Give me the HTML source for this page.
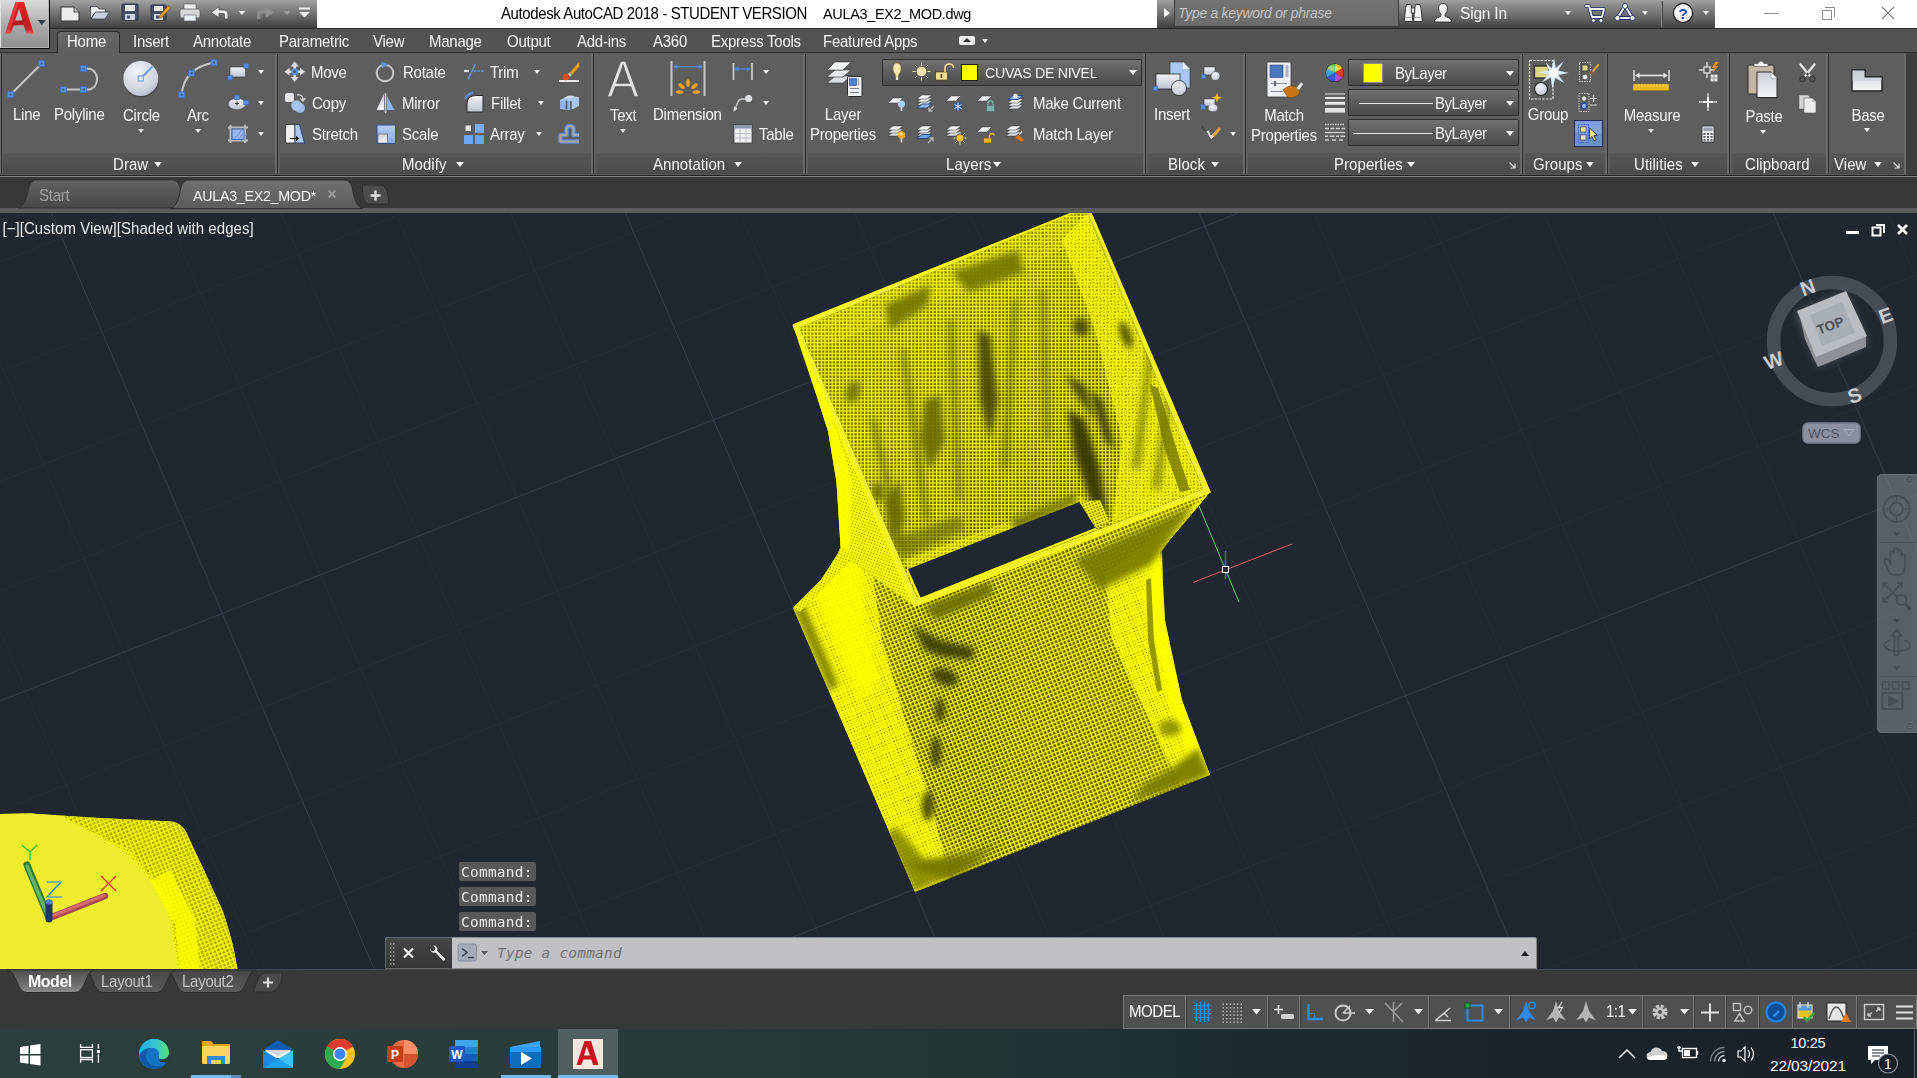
<!DOCTYPE html>
<html lang="en">
<head>
<meta charset="utf-8">
<title>Autodesk AutoCAD 2018 - STUDENT VERSION AULA3_EX2_MOD.dwg</title>
<style>
*{box-sizing:border-box;margin:0;padding:0}
html,body{width:1917px;height:1078px;overflow:hidden;background:#383838}
body{position:relative;font-family:"Liberation Sans",sans-serif;font-size:15px;color:#f0f0f0;-webkit-font-smoothing:antialiased}
.abs{position:absolute}
.t{position:absolute;white-space:nowrap;line-height:18px;height:18px;color:#f2f2f2;letter-spacing:-0.25px}
.tc{text-align:center}
.sy{transform:scaleY(1.06);transform-origin:0 14px}
svg{position:absolute;overflow:visible}
/* title */
#titlebar{left:0;top:0;width:1917px;height:28px;background:#fff}
#qat{left:49px;top:0;width:268px;height:28px;background:linear-gradient(#a2a2a2 0%,#8c8c8c 22%,#6c6c6c 55%,#4a4a4a 88%,#3e3e3e 100%)}
#appbtn{left:0;top:0;width:50px;height:49px;background:linear-gradient(#dadada 0%,#c4c4c4 25%,#a8a8a8 55%,#909090 100%);border-right:1.5px solid #0c0c0c;border-bottom:1.5px solid #0c0c0c;z-index:5;box-shadow:inset 1px 0 0 #e4e4e4,inset -1px -1px 0 #b4b4b4}
#infoc{left:1157px;top:0;width:558px;height:28px;background:linear-gradient(#a0a0a0 0%,#8a8a8a 22%,#6c6c6c 55%,#4c4c4c 88%,#404040 100%)}
/* ribbon */
#tabrow{left:0;top:28px;width:1917px;height:25px;background:#535353;border-top:1px solid #2a2a2a;border-bottom:1px solid #2c2c2c}
#ribbon{left:0;top:53px;width:1917px;height:122px;background:#5e5e5e}
.ptitle{position:absolute;top:100px;height:22px;background:linear-gradient(#575757,#4a4a4a)}
.psep{position:absolute;top:1px;width:3px;height:121px;border-left:1px solid #6a6a6a;border-right:1px solid #2b2b2b;background:#6a6a6a}
.rt{color:#f4f4f4;transform:scaleY(1.08);transform-origin:0 14px}
.combo{position:absolute;height:27px;border:1px solid #2e2e2e;background:linear-gradient(#727272,#5c5c5c 50%,#4c4c4c);border-radius:1px}
.arr{position:absolute;width:0;height:0;margin-left:-1px;border-left:4.8px solid transparent;border-right:4.8px solid transparent;border-top:5.2px solid #f4f4f4}
.arrs{position:absolute;width:0;height:0;border-left:3.5px solid transparent;border-right:3.5px solid transparent;border-top:4px solid #f4f4f4}
/* file tabs */
#ftrow{left:0;top:175px;width:1917px;height:33px;background:#383838;border-top:1px solid #222}
#ftline{left:0;top:176px;width:1917px;height:1px;background:#888}
#ftstrip{left:0;top:208px;width:1917px;height:5px;background:#5c5c5c}
/* viewport */
#vp{left:0;top:213px;width:1917px;height:756px;background:#212730;overflow:hidden}
/* bottom */
#ltrow{left:0;top:969px;width:1917px;height:60px;background:#383838;border-top:1px solid #4a4a4a}
#status{left:1123px;top:995px;width:794px;height:34px;background:#505050;border:1px solid #777}
/* taskbar */
#taskbar{left:0;top:1029px;width:1917px;height:49px;background:linear-gradient(90deg,#2c3f3c 0%,#2a3c3a 30%,#233634 50%,#1c2c2d 65%,#1a232a 82%,#1a2029 100%)}
</style>
</head>
<body>
<!-- ===== TITLE BAR ===== -->
<div id="titlebar" class="abs"></div>
<div id="qat" class="abs"></div>
<div id="infoc" class="abs"></div>
<div class="t sy" style="left:501px;top:5px;color:#000;font-size:15px;letter-spacing:-0.4px">Autodesk AutoCAD 2018 - STUDENT VERSION</div>
<div class="t sy" style="left:823px;top:5px;color:#000;font-size:14.5px;letter-spacing:-0.35px">AULA3_EX2_MOD.dwg</div>
<!-- info center -->
<div class="abs" style="left:1174px;top:0;width:225px;height:27px;background:linear-gradient(#737373,#6e6e6e 60%,#6a6a6a);border:1px solid #3c3c3c;border-top:none"></div>
<div class="abs" style="left:1164px;top:8px;width:0;height:0;border-top:5px solid transparent;border-bottom:5px solid transparent;border-left:6px solid #f0f0f0"></div>
<div class="t" style="left:1178px;top:5px;font-style:italic;color:#c4c4c4;font-size:13.8px;letter-spacing:-0.2px">Type a keyword or phrase</div>
<div class="t sy" style="left:1460px;top:5px;font-size:15.5px;color:#f4f4f4;letter-spacing:-0.2px">Sign In</div>
<div class="arrs" style="left:1565px;top:11px"></div>
<div class="arrs" style="left:1642px;top:11px"></div>
<div class="arrs" style="left:1703px;top:11px"></div>
<div class="abs" style="left:1661px;top:1px;width:1px;height:26px;background:#8a8a8a"></div><div class="abs" style="left:1662px;top:1px;width:1px;height:26px;background:#444"></div>
<svg width="560" height="28" style="left:1157px;top:0" viewBox="1157 0 560 28">
  <!-- binoculars -->
  <g fill="#f4f4f4" stroke="#2a2a2a" stroke-width="0.9" stroke-linejoin="round">
    <path d="M1406.500 4.500 h4.500 l.8 4 l1 13 h-8.600 l1.300 -13z"/><path d="M1415.500 4.500 h4.500 l1 4 l1.300 13 h-8.600 l1 -13z"/>
    <rect x="1411.300" y="8" width="3.400" height="5"/>
  </g>
  <path d="M1405.500 17.500 h6 M1414.500 17.500 h6" stroke="#9a9a9a" stroke-width="1"/>
  <!-- person -->
  <g fill="#f4f4f4" stroke="#2a2a2a" stroke-width="0.9">
    <path d="M1434.500 22 q0 -4 5 -5 q2 -.5 1.500 -2.500 q-2.500 -2.500 -2.500 -6 q0 -5 4.500 -5 q4.500 0 4.500 5 q0 3.500 -2.500 6 q-.5 2 1.500 2.500 q5 1 5 5z"/>
  </g>
  <!-- cart -->
  <g fill="none" stroke="#1c2a6a" stroke-width="3.4" stroke-linejoin="round" stroke-linecap="round"><path d="M1586 6 h3 l3 11 h10 l2 -8 h-13"/></g>
  <g fill="none" stroke="#f4f4f4" stroke-width="1.9" stroke-linejoin="round" stroke-linecap="round"><path d="M1586 6 h3 l3 11 h10 l2 -8 h-13"/></g>
  <circle cx="1593.5" cy="20.5" r="2" fill="#f4f4f4" stroke="#1c2a6a" stroke-width=".8"/><circle cx="1601" cy="20.5" r="2" fill="#f4f4f4" stroke="#1c2a6a" stroke-width=".8"/>
  <!-- a360 -->
  <g fill="none" stroke="#1c2a6a" stroke-width="3.8" stroke-linejoin="round"><path d="M1625 6 l7.5 12 h-15z"/></g>
  <g fill="none" stroke="#f4f4f4" stroke-width="2.2" stroke-linejoin="round"><path d="M1625 6 l7.5 12 h-15z"/></g>
  <circle cx="1625" cy="6" r="2.6" fill="#f4f4f4" stroke="#1c2a6a" stroke-width=".8"/><circle cx="1617.5" cy="18" r="2.6" fill="#f4f4f4" stroke="#1c2a6a" stroke-width=".8"/><circle cx="1632.5" cy="18" r="2.6" fill="#f4f4f4" stroke="#1c2a6a" stroke-width=".8"/>
  <!-- help -->
  <circle cx="1683" cy="13" r="9.6" fill="#f4f4f6" stroke="#1e1e1e" stroke-width="1.2"/>
  <text x="1683" y="18.5" text-anchor="middle" font-family="Liberation Sans, sans-serif" font-weight="bold" font-size="15.5" fill="#1f4fc0">?</text>
</svg>
<!-- window controls -->
<div class="abs" style="left:1764px;top:13px;width:14px;height:1px;background:#8c8c8c"></div>
<div class="abs" style="left:1822px;top:10px;width:10px;height:10px;border:1px solid #8c8c8c"></div>
<div class="abs" style="left:1825px;top:7px;width:10px;height:10px;border:1px solid #8c8c8c;border-left:none;border-bottom:none"></div>
<svg width="16" height="16" style="left:1881px;top:6px" viewBox="0 0 16 16"><path d="M1 1 L13 13 M13 1 L1 13" stroke="#7c7c7c" stroke-width="1.1" fill="none"/></svg>
<!-- app button -->
<div id="appbtn" class="abs"></div>
<svg width="49" height="48" style="left:0;top:0;z-index:6" viewBox="0 0 49 48">
  <defs><linearGradient id="agr" x1="0" y1="0" x2="0" y2="1"><stop offset="0" stop-color="#e2262a"/><stop offset=".55" stop-color="#cc1a20"/><stop offset=".85" stop-color="#c4242a"/><stop offset="1" stop-color="#e0686a"/></linearGradient></defs>
  <path d="M15.500 2 h8.500 l9.800 31.800 h-7.600 l-2.400 -8.600 h-10 l-3.200 8.600 h-5.600z M19 9 l-4 11.500 h7.600z" fill="url(#agr)" fill-rule="evenodd"/>
  <path d="M15.500 2 l3 0 l-9.500 31.800 h-4z" fill="#ef4a4e" opacity=".55"/>
  <path d="M11.500 24 l12.500 -4.500 l.8 3 l-11.500 3.500z" fill="#a8141a" opacity=".7"/>
  <path d="M37.500 20 h8.500 l-4.250 5z" fill="#3a3f4c"/>
</svg>
<!-- QAT icons -->
<svg width="268" height="28" style="left:49px;top:0" viewBox="49 0 268 28">
  <!-- new -->
  <path d="M61 7 h13 l5 5 v9 h-18z" fill="#ececec" stroke="#333" stroke-width="1"/>
  <path d="M74 7 v5 h5" fill="#bbb" stroke="#333" stroke-width=".8"/>
  <!-- open -->
  <path d="M90.500 18.500 v-12 h6.500 l2 2.500 h6.500 v3.500 h-10 l-5 6z" fill="#eceef2" stroke="#3a3e48" stroke-width=".8"/>
  <path d="M91 19 l4.500 -7 h14 l-4.500 7z" fill="#c9cedb" stroke="#3a3e48" stroke-width=".8"/>
  <!-- save -->
  <rect x="122" y="4" width="16" height="16" rx="1" fill="#474d64" stroke="#2c3040"/>
  <rect x="125" y="5" width="10" height="6" fill="#e8e8e8"/><rect x="125" y="14" width="10" height="6" fill="#cfd4de"/><rect x="127" y="15.500" width="3" height="3" fill="#474d64"/>
  <!-- saveas -->
  <rect x="151" y="5" width="15" height="15" rx="1" fill="#474d64" stroke="#2c3040"/>
  <rect x="154" y="6" width="9" height="5" fill="#e8e8e8"/><rect x="154" y="14" width="9" height="6" fill="#cfd4de"/><rect x="156" y="15.500" width="3" height="3" fill="#474d64"/>
  <path d="M160 15 l8 -9 l2.500 2 l-8 9 l-3.500 1z" fill="#e8a020" stroke="#6b4a10" stroke-width=".6"/>
  <!-- print -->
  <rect x="184" y="4" width="12" height="6" fill="#f0f0f0" stroke="#555" stroke-width=".6"/>
  <rect x="180" y="9" width="20" height="9" rx="2" fill="#d6d6d6" stroke="#555" stroke-width=".7"/>
  <rect x="184" y="15" width="12" height="6" fill="#e9f0fb" stroke="#555" stroke-width=".6"/>
  <!-- undo -->
  <path d="M211 12.500 l8 -6 v3.500 h5 q4 0 4 4 v5 h-3.500 v-4.500 q0 -1 -1 -1 h-4.500 v4z" fill="#ececec" stroke="#444" stroke-width=".7"/>
  <path d="M238.500 11 h7 l-3.500 4z" fill="#f2f2f2"/>
  <!-- redo (disabled) -->
  <path d="M274 12.500 l-8 -6 v3.500 h-5 q-4 0 -4 4 v5 h3.500 v-4.500 q0 -1 1 -1 h4.500 v4z" fill="#8f8f8f"/>
  <path d="M283.500 11 h7 l-3.500 4z" fill="#a0a0a0"/>
  <!-- customize -->
  <rect x="299" y="7.500" width="11" height="2" fill="#f2f2f2"/>
  <path d="M299 12 h11 l-5.500 5.500z" fill="#f2f2f2"/>
</svg>
<!-- ===== RIBBON TABS ===== -->
<div id="tabrow" class="abs"></div>
<div class="abs" style="left:57px;top:31px;width:63px;height:23px;background:linear-gradient(#666,#5e5e5e);border:1px solid #2c2c2c;border-bottom:none;border-radius:3px 3px 0 0"></div>
<div class="t rt" style="left:67px;top:33px">Home</div>
<div class="t rt" style="left:133px;top:33px">Insert</div>
<div class="t rt" style="left:193px;top:33px">Annotate</div>
<div class="t rt" style="left:279px;top:33px">Parametric</div>
<div class="t rt" style="left:373px;top:33px">View</div>
<div class="t rt" style="left:429px;top:33px">Manage</div>
<div class="t rt" style="left:507px;top:33px">Output</div>
<div class="t rt" style="left:577px;top:33px">Add-ins</div>
<div class="t rt" style="left:653px;top:33px">A360</div>
<div class="t rt" style="left:711px;top:33px">Express Tools</div>
<div class="t rt" style="left:823px;top:33px">Featured Apps</div>
<div class="abs" style="left:959px;top:36px;width:16px;height:9px;background:#ededed;border-radius:2px"></div>
<div class="abs" style="left:963px;top:38px;width:0;height:0;border-left:4px solid transparent;border-right:4px solid transparent;border-bottom:4px solid #333"></div>
<div class="arrs" style="left:982px;top:39px"></div>
<!-- ===== RIBBON BODY ===== -->
<div id="ribbon" class="abs">
  <div class="ptitle" style="left:3px;width:272px"></div>
  <div class="ptitle" style="left:280px;width:311px"></div>
  <div class="ptitle" style="left:596px;width:207px"></div>
  <div class="ptitle" style="left:808px;width:335px"></div>
  <div class="ptitle" style="left:1148px;width:95px"></div>
  <div class="ptitle" style="left:1248px;width:272px"></div>
  <div class="ptitle" style="left:1525px;width:80px"></div>
  <div class="ptitle" style="left:1610px;width:117px"></div>
  <div class="ptitle" style="left:1732px;width:94px"></div>
  <div class="ptitle" style="left:1831px;width:73px"></div>
  <div class="psep" style="left:0px;border-left:none;width:2px"></div>
  <div class="psep" style="left:275px"></div>
  <div class="psep" style="left:591px"></div>
  <div class="psep" style="left:803px"></div>
  <div class="psep" style="left:1143px"></div>
  <div class="psep" style="left:1243px"></div>
  <div class="psep" style="left:1520px"></div>
  <div class="psep" style="left:1605px"></div>
  <div class="psep" style="left:1727px"></div>
  <div class="psep" style="left:1826px"></div>
  <div class="psep" style="left:1904px"></div>
  <div class="abs" style="left:0;top:121px;width:1917px;height:1px;background:#5a5a5a"></div>
</div>
<!-- panel titles -->
<div class="t rt" style="left:113px;top:156px;letter-spacing:0.05px">Draw</div><div class="arr" style="left:155px;top:162px"></div>
<div class="t rt" style="left:402px;top:156px;letter-spacing:0.05px">Modify</div><div class="arr" style="left:457px;top:162px"></div>
<div class="t rt" style="left:653px;top:156px;letter-spacing:0.05px">Annotation</div><div class="arr" style="left:735px;top:162px"></div>
<div class="t rt" style="left:946px;top:156px;letter-spacing:0.05px">Layers</div><div class="arr" style="left:994px;top:162px"></div>
<div class="t rt" style="left:1168px;top:156px;letter-spacing:0.05px">Block</div><div class="arr" style="left:1212px;top:162px"></div>
<div class="t rt" style="left:1334px;top:156px;letter-spacing:0.05px">Properties</div><div class="arr" style="left:1408px;top:162px"></div>
<div class="t rt" style="left:1533px;top:156px;letter-spacing:0.05px">Groups</div><div class="arr" style="left:1587px;top:162px"></div>
<div class="t rt" style="left:1634px;top:156px;letter-spacing:0.05px">Utilities</div><div class="arr" style="left:1692px;top:162px"></div>
<div class="t rt" style="left:1745px;top:156px;letter-spacing:0.05px">Clipboard</div>
<div class="t rt" style="left:1834px;top:156px;letter-spacing:0.05px">View</div><div class="arr" style="left:1875px;top:162px"></div>
<!-- Draw labels -->
<div class="t rt" style="left:13px;top:106px">Line</div>
<div class="t rt" style="left:54px;top:106px">Polyline</div>
<div class="t rt" style="left:123px;top:107px">Circle</div><div class="arrs" style="left:138px;top:129px"></div>
<div class="t rt" style="left:187px;top:107px">Arc</div><div class="arrs" style="left:195px;top:129px"></div>
<div class="arrs" style="left:258px;top:70px"></div><div class="arrs" style="left:258px;top:101px"></div><div class="arrs" style="left:258px;top:132px"></div>
<!-- Modify labels -->
<div class="t rt" style="left:311px;top:64px">Move</div>
<div class="t rt" style="left:312px;top:95px">Copy</div>
<div class="t rt" style="left:312px;top:126px">Stretch</div>
<div class="t rt" style="left:403px;top:64px">Rotate</div>
<div class="t rt" style="left:402px;top:95px">Mirror</div>
<div class="t rt" style="left:402px;top:126px">Scale</div>
<div class="t rt" style="left:490px;top:64px">Trim</div><div class="arrs" style="left:534px;top:70px"></div>
<div class="t rt" style="left:491px;top:95px">Fillet</div><div class="arrs" style="left:538px;top:101px"></div>
<div class="t rt" style="left:490px;top:126px">Array</div><div class="arrs" style="left:536px;top:132px"></div>
<!-- Annotation labels -->
<div class="t rt" style="left:610px;top:107px">Text</div><div class="arrs" style="left:620px;top:129px"></div>
<div class="t rt" style="left:653px;top:106px">Dimension</div>
<div class="t rt" style="left:759px;top:126px">Table</div>
<div class="arrs" style="left:763px;top:70px"></div><div class="arrs" style="left:763px;top:101px"></div>
<!-- Layers labels -->
<div class="t rt tc" style="left:803px;width:80px;top:106px">Layer</div>
<div class="t rt tc" style="left:803px;width:80px;top:126px">Properties</div>
<div class="combo" style="left:882px;top:59px;width:260px"></div>
<div class="t rt" style="left:985px;top:64px;font-size:14.2px;letter-spacing:-0.3px">CUVAS DE NIVEL</div><div class="arr" style="left:1130px;top:70px"></div>
<div class="abs" style="left:961px;top:64px;width:17px;height:17px;background:#ffff00;border:1px solid #222"></div>
<div class="t rt" style="left:1033px;top:95px">Make Current</div>
<div class="t rt" style="left:1033px;top:126px">Match Layer</div>
<!-- Block -->
<div class="t rt tc" style="left:1142px;width:60px;top:106px">Insert</div>
<div class="arrs" style="left:1230px;top:132px"></div>
<!-- Properties -->
<div class="t rt tc" style="left:1244px;width:80px;top:107px">Match</div>
<div class="t rt tc" style="left:1244px;width:80px;top:127px">Properties</div>
<div class="combo" style="left:1348px;top:59px;width:171px"></div>
<div class="combo" style="left:1348px;top:89px;width:171px"></div>
<div class="combo" style="left:1348px;top:119px;width:171px"></div>
<div class="abs" style="left:1363px;top:63px;width:20px;height:20px;background:#ffff00;border:1px solid #8c8c8c"></div>
<div class="t rt" style="left:1395px;top:65px;letter-spacing:-0.5px">ByLayer</div><div class="arr" style="left:1507px;top:71px"></div>
<div class="abs" style="left:1359px;top:103px;width:74px;height:1px;background:#e6e6e6"></div>
<div class="t rt" style="left:1435px;top:95px;letter-spacing:-0.5px">ByLayer</div><div class="arr" style="left:1507px;top:101px"></div>
<div class="abs" style="left:1353px;top:133px;width:80px;height:1px;background:#e6e6e6"></div>
<div class="t rt" style="left:1435px;top:125px;letter-spacing:-0.5px">ByLayer</div><div class="arr" style="left:1507px;top:131px"></div>
<!-- Groups / Utilities / Clipboard / View -->
<div class="t rt tc" style="left:1518px;width:60px;top:106px">Group</div>
<div class="t rt tc" style="left:1617px;width:70px;top:107px">Measure</div><div class="arrs" style="left:1648px;top:129px"></div>
<div class="t rt tc" style="left:1734px;width:60px;top:108px">Paste</div><div class="arrs" style="left:1760px;top:130px"></div>
<div class="t rt tc" style="left:1838px;width:60px;top:107px">Base</div><div class="arrs" style="left:1864px;top:128px"></div>
<svg width="400" height="12" style="left:1505px;top:160px" viewBox="1505 160 400 12"><g stroke="#dcdcdc" stroke-width="1.200" fill="none"><path d="M1509.500 162.500 l5 5 M1515 163.500 v4.500 h-4.500"/><path d="M1893.500 162.500 l5 5 M1899 163.500 v4.500 h-4.500"/></g></svg>
<!-- ===== RIBBON ICONS ===== -->
<div class="abs" style="left:1906px;top:53px;width:11px;height:122px;background:#3e3e3e"></div>
<div class="t" style="left:606px;top:52px;width:34px;text-align:center;height:56px;line-height:56px;font-size:51px;color:#e2e2e2;letter-spacing:0;-webkit-text-stroke:1.3px #5e5e5e;transform:scaleX(.94)">A</div>
<svg width="1917" height="100" style="left:0;top:55px" viewBox="0 55 1917 100">
<defs>
  <linearGradient id="gW" x1="0" y1="0" x2="0" y2="1"><stop offset="0" stop-color="#f4f5f8"/><stop offset="1" stop-color="#bcc1cf"/></linearGradient>
  <linearGradient id="gW2" x1="0" y1="0" x2="0" y2="1"><stop offset="0" stop-color="#c9cdd6"/><stop offset="1" stop-color="#f6f6f8"/></linearGradient>
  <linearGradient id="gB" x1="0" y1="0" x2="0" y2="1"><stop offset="0" stop-color="#b7cdf0"/><stop offset="1" stop-color="#86a9e2"/></linearGradient>
  <radialGradient id="gC" cx=".4" cy=".3" r=".8"><stop offset="0" stop-color="#f2f3f8"/><stop offset=".7" stop-color="#cfd3df"/><stop offset="1" stop-color="#a9b0c4"/></radialGradient>
  <g id="grip"><rect x="-3" y="-3" width="6" height="6" fill="#5d92e6" stroke="#3f6cc0" stroke-width=".8"/><rect x="-1" y="-1" width="2" height="2" fill="#3a5688"/></g>
  <g id="grips"><rect x="-2.200" y="-2.200" width="4.400" height="4.400" fill="#5d92e6" stroke="#3f6cc0" stroke-width=".7"/></g>
  <g id="sheet"><path d="M-7 2 l5 -5 h10 l-5 5z" fill="#eef0f3" stroke="#3a3a3a" stroke-width=".5"/></g>
  <g id="stack"><path d="M-7 6 l5 -4 h10 l-5 4z" fill="#d8dbe0" stroke="#333" stroke-width=".5"/><path d="M-7 3 l5 -4 h10 l-5 4z" fill="#e4e6ea" stroke="#333" stroke-width=".5"/><path d="M-7 0 l5 -4 h10 l-5 4z" fill="#f2f3f5" stroke="#333" stroke-width=".5"/></g>
</defs>
<!-- DRAW -->
<path d="M10.500 94.700 L41.700 63.500" stroke="#c6c6c6" stroke-width="2" fill="none"/>
<use href="#grip" x="10.500" y="94.700"/><use href="#grip" x="41.700" y="63.500"/>
<path d="M63.400 89.600 H87 C100.500 89.600 100.500 68.600 87 68.600 H83.500" stroke="#c6c6c6" stroke-width="2" fill="none"/>
<use href="#grip" x="63.400" y="89.600"/><use href="#grip" x="83.500" y="89.600"/><use href="#grip" x="83.500" y="68.600"/>
<circle cx="141" cy="80" r="17.500" fill="#333" opacity=".55"/>
<circle cx="140.800" cy="78.500" r="17.500" fill="url(#gC)"/>
<path d="M140.800 78.500 L152.500 66.500" stroke="#6fa0f0" stroke-width="2" fill="none"/>
<rect x="138.300" y="76" width="5" height="5" fill="#f4f6fb" stroke="#6fa0f0" stroke-width="1.200"/>
<path d="M181.600 94.800 Q184 68 214 62.500" stroke="#c6c6c6" stroke-width="2" fill="none"/>
<use href="#grip" x="181.600" y="94.800"/><use href="#grip" x="191.600" y="73.100"/><use href="#grip" x="214" y="62.500"/>
<rect x="230" y="67" width="15.500" height="10" fill="url(#gW)" stroke="#333" stroke-width=".6"/><use href="#grips" x="246" y="66"/><use href="#grips" x="230" y="77.700"/>
<ellipse cx="237" cy="104" rx="8.700" ry="5.700" fill="url(#gW)" stroke="#444" stroke-width=".5"/><path d="M235 103.500 h4 M237 101.500 v4" stroke="#222" stroke-width="1"/><use href="#grips" x="237" y="97.500"/><use href="#grips" x="246" y="102.500"/>
<path d="M228 127.500 h20 M228 140.500 h20 M230.500 125 v18 M245 125 v18" stroke="#bdbdbd" stroke-width="2" fill="none"/>
<rect x="232" y="129" width="12" height="10.500" fill="#9ab6ec" stroke="#3c66b8" stroke-width="1"/><path d="M234 139 l8 -9 M238 139.500 l6 -7 M240 142 l7 -8" stroke="#5f8fe6" stroke-width="1" fill="none"/>
<!-- MODIFY col1 -->
<g fill="#dedede"><path d="M294.700 61.500 l4 5 h-2.700 v3.500 h-2.600 v-3.500 h-2.700z"/><path d="M294.700 82 l4 -5 h-2.700 v-3.500 h-2.600 v3.500 h-2.700z"/><path d="M284.500 71.800 l5 -4 v2.700 h3.500 v2.600 h-3.500 v2.700z"/><path d="M305 71.800 l-5 -4 v2.700 h-3.500 v2.600 h3.500 v2.700z"/></g>
<circle cx="294.700" cy="71.800" r="2.600" fill="none" stroke="#5d8fe0" stroke-width="1.800"/>
<rect x="285" y="93" width="9" height="9" rx="2.500" fill="#e2e4ea"/><circle cx="300" cy="108" r="5" fill="#9fb9e4"/><circle cx="296.500" cy="105.500" r="5.200" fill="#a9c5f0"/><path d="M297 95 q6 -1 6 5 M300.500 98.500 l2.500 2.500 l2.500 -3" stroke="#cfcfcf" stroke-width="1.300" fill="none"/>
<path d="M285.500 124.500 h9.500 v18.500 h-9.500z" fill="#eff0f2" stroke="#2b2b2b" stroke-width=".8"/><path d="M295 124.500 h4.500 l5 18.500 h-9.500z" fill="#a9c6ec" stroke="#25407a" stroke-width=".9"/><path d="M290 138 h6 v-2.200 l3 2.700 l-3 2.700 v-2.200 h-6z" fill="#111"/>
<!-- MODIFY col2 -->
<circle cx="385" cy="73" r="8.300" fill="none" stroke="#c6c6c6" stroke-width="2"/><path d="M381.500 61.500 l7 3 l-6.500 4z" fill="#5d92e6"/>
<path d="M376.500 110 L384 94 V110Z" fill="url(#gW2)"/><path d="M385.500 93 V113" stroke="#d4d4d4" stroke-width="1.500"/><path d="M387 110 V96 L394.500 110Z" fill="#8db3e8"/>
<rect x="377" y="125" width="18.500" height="18.500" fill="url(#gB)" stroke="#33508f" stroke-width="1"/><rect x="378" y="134" width="9.500" height="9" fill="url(#gW2)" stroke="#555" stroke-width=".6"/>
<!-- MODIFY col3 -->
<path d="M464 71 h5" stroke="#e4e4e4" stroke-width="2.200"/><path d="M468 79.500 L475.500 64" stroke="#6796e4" stroke-width="1.600"/><path d="M474 71 h10" stroke="#6796e4" stroke-width="1.500" stroke-dasharray="2.500 1"/>
<path d="M465 99 Q467 94 473 92.500" stroke="#5d8fe0" stroke-width="2" fill="none"/><path d="M467 112 V104 Q467 95.500 476 95.500 H483 V112Z" fill="url(#gW)" stroke="#2c2c2c" stroke-width="1"/>
<rect x="465" y="125" width="6.500" height="6.500" fill="#e6e6e6" stroke="#444" stroke-width=".8"/><rect x="475" y="124" width="9" height="9" fill="#7aacf0"/><rect x="464" y="135" width="9" height="9" fill="#6fa4ee"/><rect x="475" y="135" width="9" height="9" fill="#6fa4ee"/>
<!-- MODIFY col4 -->
<path d="M559 81 h20" stroke="#e8e8e8" stroke-width="2"/><path d="M579 62 l-9.500 10.500 l2.500 2.500 l7.500 -8.500z" fill="#e2a21e" stroke="#8a5c10" stroke-width=".5"/><path d="M569.500 72.500 l2.500 2.500 l-1.800 1.800 l-2.500 -2.500z" fill="#c0c0c0"/><circle cx="565.800" cy="77" r="3.200" fill="#e2520e"/>
<path d="M560 100 l8 -4 l11 1 v9 l-8 4 l-11 -1z" fill="#a9c6ec"/><path d="M560 100 l11 1 v9 l-11 -1z" fill="#8fb3e6"/><path d="M564 98 l5 -2.500 l6 .5 l-5 2.500z" fill="#cfe0f6"/><path d="M566.500 100.500 v9 M571 101 v9" stroke="#5e5e5e" stroke-width="1.600"/>
<path d="M579 141.500 H560.500 V135 H566.500 V129.500 Q566.500 126 570 126 Q573.500 126 573.500 129.500 V135 H579" stroke="#5d8fe0" stroke-width="4.500" fill="none" stroke-linejoin="round" opacity=".9"/><path d="M579 141.500 H560.500 V135 H566.500 V129.500 Q566.500 126 570 126 Q573.500 126 573.500 129.500 V135 H579" stroke="#a8a8a8" stroke-width="2" fill="none" stroke-linejoin="round"/>
<!-- ANNOTATION -->
<path d="M671.500 61 V96 M704.500 61 V96" stroke="#c8c8c8" stroke-width="2"/><path d="M675 66.700 H701" stroke="#4f86e4" stroke-width="1.400"/><path d="M673 66.700 l4 -2.600 v5.200z M703 66.700 l-4 -2.600 v5.200z" fill="#4f86e4"/>
<g fill="#f0a010"><ellipse cx="688" cy="83" rx="1.800" ry="3.800"/><ellipse cx="681.500" cy="86" rx="1.800" ry="3.800" transform="rotate(-50 681.500 86)"/><ellipse cx="694.500" cy="86" rx="1.800" ry="3.800" transform="rotate(50 694.500 86)"/><ellipse cx="679.500" cy="92" rx="1.800" ry="3.800" transform="rotate(-85 679.500 92)"/><ellipse cx="696.500" cy="92" rx="1.800" ry="3.800" transform="rotate(85 696.500 92)"/></g>
<path d="M733.500 63 V80 M752 63 V80" stroke="#c8c8c8" stroke-width="1.800"/><path d="M737 69 H749" stroke="#4f86e4" stroke-width="1.400"/><path d="M734.500 69 l4 -2.600 v5.200z M751 69 l-4 -2.600 v5.200z" fill="#4f86e4"/>
<circle cx="748.600" cy="98.500" r="3.600" fill="#dfe1e6"/><path d="M745 99 h-3 q-3 0 -4.500 4 l-2.500 6" stroke="#c8c8c8" stroke-width="1.500" fill="none"/><path d="M733.500 112 l.5 -5.500 l3.500 2z" fill="#dcdcdc"/>
<rect x="734" y="124.500" width="18" height="18.500" fill="#f0f0f2" stroke="#3a3a3a" stroke-width=".8"/><rect x="734.500" y="125" width="17" height="3.500" fill="#8c98b4"/><path d="M734 133.500 h18 M734 138 h18 M740 128.500 v14.500 M746 128.500 v14.500" stroke="#b8bcc6" stroke-width="1"/>
<!-- LAYERS -->
<g stroke="#333" stroke-width=".6"><path d="M827 83 l8 -7 h16 l-8 7z" fill="#dadde2"/><path d="M827 77 l8 -7 h16 l-8 7z" fill="#e8eaee"/><path d="M827 70 l8 -8 h16 l-8 8z" fill="#f6f7f9"/></g>
<rect x="847.500" y="76.500" width="14.500" height="20" rx="1" fill="#f0f1f4" stroke="#2a2a2a" stroke-width="1"/><rect x="849.500" y="78.500" width="7" height="7" fill="#4f7fd0" stroke="#2a4a8a" stroke-width=".6"/><path d="M858.500 78.500 v7" stroke="#a0a4ae" stroke-width="1.500"/><path d="M850 88.500 h9 M850 92.500 h9" stroke="#7a8090" stroke-width="1.200"/>
<path d="M893 69 q0 -6 4 -6 q4 0 4 6 q0 3 -2.500 6 v2 h-3 v-2 q-2.500 -3 -2.500 -6z" fill="#f7e6a6" stroke="#6b5a20" stroke-width=".4"/><rect x="895.800" y="77" width="2.400" height="3" fill="#e8e8e8"/>
<circle cx="921.500" cy="71.500" r="4.800" fill="#f6e4a8"/><path d="M921.500 62.500 v3 M921.500 77.500 v3 M912.500 71.500 h3 M927.500 71.500 h3 M915 65 l2.200 2.200 M925.800 75.800 l2.200 2.200 M915 78 l2.200 -2.200 M925.800 67.200 l2.200 -2.200" stroke="#e8e0c0" stroke-width="1"/>
<rect x="935.500" y="72" width="12" height="8" fill="#f2de94" stroke="#4a3c10" stroke-width=".7"/><path d="M945 72 v-4 q0 -4 4.500 -4 q4 0 4 4" stroke="#f2de94" stroke-width="1.600" fill="none"/><rect x="940.700" y="74" width="1.500" height="4" fill="#4a3c10"/>
<!-- layers row 2 -->
<use href="#sheet" x="895" y="101"/><circle cx="901.500" cy="104" r="3.600" fill="#a8cdf6"/><rect x="900.700" y="107" width="1.600" height="4" fill="#e8e8e8"/>
<use href="#stack" x="924" y="99"/><path d="M917 108 l5 -4 h10 l-5 4z" fill="#8fb5ec" stroke="#1f3f86" stroke-width=".8"/><path d="M934 106 l-5 5 M929 107.500 v3.500 h3.500" stroke="#b0b0b0" stroke-width="1.400" fill="none"/>
<use href="#sheet" x="953" y="99"/><path d="M954 104 l4 -2.300 l4 2.300 v4.600 l-4 2.300 l-4 -2.300z" fill="#2c56b0"/><path d="M958 102.500 v8 M954.500 104.500 l7 4 M961.500 104.500 l-7 4" stroke="#e6eefc" stroke-width="1"/>
<use href="#sheet" x="984" y="99"/><rect x="986.500" y="105.500" width="8" height="6" fill="#7fb0a8" stroke="#3a6a62" stroke-width=".6"/><path d="M988 105.500 v-2 q0 -2.500 2.500 -2.500 q2.500 0 2.500 2.500 v2" stroke="#7fb0a8" stroke-width="1.300" fill="none"/>
<use href="#stack" x="1015" y="103"/><path d="M1008 99.500 l5 -4 h10 l-5 4z" fill="#8fb5ec" stroke="#1f3f86" stroke-width=".8"/><circle cx="1015.500" cy="96" r="2.300" fill="#e8e8ea"/>
<!-- layers row 3 -->
<use href="#stack" x="895" y="130"/><circle cx="901.500" cy="135" r="3.700" fill="#f6a820"/><circle cx="901" cy="134" r="1.600" fill="#fde28a"/><rect x="900.700" y="138.500" width="1.600" height="4" fill="#e8e8e8"/>
<use href="#stack" x="924" y="130"/><path d="M917 138.500 l5 -4 h10 l-5 4z" fill="#6f9fe4" stroke="#1f3f86" stroke-width=".8"/><path d="M928 143 l5 -5 M929.500 138 h3.500 v3.500" stroke="#b0b0b0" stroke-width="1.400" fill="none"/>
<use href="#stack" x="953" y="130"/><circle cx="960" cy="138" r="3.500" fill="#f8c218"/><path d="M960 131.500 v2 M960 142.500 v2 M953.500 138 h2 M964.500 138 h2 M955.500 133.500 l1.500 1.500 M963 141 l1.500 1.500 M955.500 142.500 l1.500 -1.500 M963 135 l1.500 -1.500" stroke="#f0ecd0" stroke-width="1"/>
<use href="#sheet" x="984" y="130"/><rect x="983.500" y="138" width="8" height="5" fill="#e8b414" stroke="#6a4e08" stroke-width=".6"/><path d="M989.500 138 v-2 q0 -2.500 2.500 -2.500 q2 0 2 2" stroke="#e8b414" stroke-width="1.300" fill="none"/>
<use href="#stack" x="1013" y="130"/><path d="M1015 137 l6 5 l3 -2 l-5 -5z" fill="#d8720e"/><path d="M1019 134.500 l3 -3" stroke="#e8e8e8" stroke-width="1.300"/>
<!-- BLOCK -->
<path d="M1170 62 h13 l7 7 v19 h-20z" fill="#a9c8f0" stroke="#333" stroke-width=".6"/><path d="M1183 62 v7 h7z" fill="#e4eefb"/>
<rect x="1156" y="74" width="24" height="15" fill="url(#gW)" stroke="#2a2a2a" stroke-width=".8"/><circle cx="1179" cy="88" r="7.600" fill="url(#gC)" stroke="#2a2a2a" stroke-width=".8"/><path d="M1179 80.500 v7.500 h-7.500" stroke="#b4b8c4" stroke-width=".8" fill="none"/><use href="#grips" x="1155.500" y="88.500"/>
<rect x="1204" y="67" width="11" height="8" fill="url(#gW)" stroke="#333" stroke-width=".5"/><circle cx="1215.500" cy="76" r="4.500" fill="url(#gC)" stroke="#333" stroke-width=".5"/><use href="#grips" x="1203.500" y="76.500"/>
<rect x="1204" y="99" width="11" height="7" fill="url(#gW)" stroke="#333" stroke-width=".5"/><ellipse cx="1213" cy="108" rx="4.500" ry="3.500" fill="url(#gC)"/><path d="M1217 93 l1.500 3.500 l3.500 1 l-3.500 1.500 l-1.500 3.500 l-1.500 -3.500 l-3.500 -1.500 l3.500 -1z" fill="#f4b41e"/><use href="#grips" x="1203" y="107"/>
<path d="M1206 131 l5 9 l9 -9 l-3 -2 l-6 6 l-2 -5z" fill="#e4e4e4" stroke="#333" stroke-width=".5"/><path d="M1212 135 l7 -8 l2 2 l-7 8z" fill="#e89c20"/><path d="M1202 126 q1 4 4 5" stroke="#333" stroke-width="1" fill="none"/>
<!-- PROPERTIES -->
<rect x="1267" y="62" width="24" height="35" rx="1" fill="#eef0f3" stroke="#3a3a3a" stroke-width=".8"/><rect x="1270" y="65" width="13" height="12.500" fill="#4878c0" stroke="#2a4a8a" stroke-width=".6"/><path d="M1287 65 v12" stroke="#b0b4be" stroke-width="3"/><path d="M1271 83.500 h16 M1271 91.500 h12" stroke="#8a90a0" stroke-width="1.200"/><path d="M1275 81 v5" stroke="#6a7080" stroke-width="2.500"/>
<path d="M1283 90 q6 -6 14 -3 l3 6 q-6 6 -12 4z" fill="#c87414" stroke="#7a4408" stroke-width=".6"/><path d="M1296 88 l5 -6 l2.500 2 l-4.500 6.500z" fill="#e8e8e8" stroke="#555" stroke-width=".5"/>
<g><circle cx="1334.800" cy="72.800" r="9.300" fill="#222"/><path d="M1334.800 72.800 L1334.800 64 A8.800 8.800 0 0 1 1342.400 68.400Z" fill="#f2c414"/><path d="M1334.800 72.800 L1342.400 68.400 A8.800 8.800 0 0 1 1342.400 77.200Z" fill="#e83a24"/><path d="M1334.800 72.800 L1342.400 77.200 A8.800 8.800 0 0 1 1334.800 81.600Z" fill="#b44ec8"/><path d="M1334.800 72.800 L1334.800 81.600 A8.800 8.800 0 0 1 1327.200 77.200Z" fill="#3a5ae0"/><path d="M1334.800 72.800 L1327.200 77.200 A8.800 8.800 0 0 1 1327.200 68.400Z" fill="#2aa8e0"/><path d="M1334.800 72.800 L1327.200 68.400 A8.800 8.800 0 0 1 1334.800 64Z" fill="#58c83a"/><ellipse cx="1333" cy="68.500" rx="5.500" ry="3" fill="#fff" opacity=".35"/></g>
<path d="M1325 94 h20" stroke="#e4e4e4" stroke-width="1"/><path d="M1325 98 h20" stroke="#e4e4e4" stroke-width="2"/><path d="M1325 103.300 h20" stroke="#e4e4e4" stroke-width="3"/><path d="M1325 110.300 h20" stroke="#e4e4e4" stroke-width="4.600"/>
<path d="M1325 124.500 h20" stroke="#cfcfcf" stroke-width="1.400" stroke-dasharray="1.500 1"/><path d="M1325 128.500 h20" stroke="#cfcfcf" stroke-width="1.400" stroke-dasharray="4 1.500"/><path d="M1325 132.500 h20" stroke="#cfcfcf" stroke-width="1.400"/><path d="M1325 136.200 h20" stroke="#cfcfcf" stroke-width="1.400" stroke-dasharray="3 1.500 5 1.500"/><path d="M1325 140 h20" stroke="#cfcfcf" stroke-width="1.400" stroke-dasharray="4 3"/>
<!-- GROUPS -->
<rect x="1529.500" y="60.500" width="23.500" height="38.500" fill="none" stroke="#e6e6e6" stroke-width="1.200" stroke-dasharray="2.500 1.200"/>
<rect x="1534.500" y="66" width="14" height="12" fill="#dada86" stroke="#222" stroke-width="1.200"/><circle cx="1541" cy="89" r="6.500" fill="url(#gC)" stroke="#222" stroke-width="1.200"/>
<path d="M1554 58 l1.800 10 l8 -7 l-5.500 9.500 l10.500 2.500 l-10.500 2 l6 8 l-9 -5 l-3 11 l-1.500 -11.500 l-9 5 l6.500 -8 l-10 -2 l10.500 -2 l-3 -8 l6 6z" fill="#dbeaff"/><circle cx="1554" cy="73" r="4.500" fill="#fff"/>
<rect x="1579.500" y="62.500" width="11" height="19" fill="none" stroke="#cfcfcf" stroke-width="1" stroke-dasharray="1.500 1"/><rect x="1582" y="65" width="6" height="6" fill="#dada86" stroke="#333" stroke-width=".8"/><circle cx="1585" cy="77" r="2.800" fill="#e6eaf0" stroke="#333" stroke-width=".6"/><path d="M1598 63.500 l-6 7.500 l1.500 1.500 l6 -7.500z" fill="#e2a21e"/><circle cx="1591" cy="73" r="1.300" fill="#d04818"/>
<rect x="1579" y="93.500" width="10" height="18" fill="none" stroke="#cfcfcf" stroke-width="1" stroke-dasharray="1.500 1"/><circle cx="1584" cy="98.500" r="2.600" fill="#e6eaf0" stroke="#333" stroke-width=".6"/><circle cx="1584" cy="106" r="2.800" fill="#8fb5ec" stroke="#234a9a" stroke-width="1.200"/><path d="M1590 98.500 h7 M1593.500 95 v7 M1590 105 h7" stroke="#cfcfcf" stroke-width="1.200"/>
<rect x="1574.500" y="120.500" width="28" height="26" fill="#6f8ed0" stroke="#1f2f5c" stroke-width="1"/><rect x="1575.500" y="121.500" width="26" height="12" fill="#8aa6de" opacity=".7"/><rect x="1578.500" y="124.500" width="10" height="18" fill="none" stroke="#2a62e8" stroke-width="1" stroke-dasharray="1.500 1"/><rect x="1580.500" y="127" width="5.500" height="5" fill="#e6e48a" stroke="#444" stroke-width=".6"/><rect x="1580.500" y="135" width="5.500" height="5" fill="#d4e2ea" stroke="#444" stroke-width=".6"/><path d="M1589.500 128 v11 l2.500 -2.500 l2 4.500 l2 -1 l-2 -4.500 h3.500z" fill="#e6e48a" stroke="#1f2f5c" stroke-width=".8"/>
<!-- UTILITIES -->
<path d="M1634 70 v11 M1669 70 v11" stroke="#d8d8d8" stroke-width="1.600"/><path d="M1637 75.500 h29" stroke="#e8e8e8" stroke-width="1.600"/><path d="M1635 75.500 l4.500 -2.800 v5.600z M1668 75.500 l-4.500 -2.800 v5.600z" fill="#e8e8e8"/>
<rect x="1633" y="84" width="36" height="6.500" rx="1" fill="#eab81c" stroke="#a87808" stroke-width=".6"/><path d="M1636 84 v2.500 M1639 84 v2.500 M1642 84 v2.500 M1645 84 v2.500 M1648 84 v2.500 M1651 84 v2.500 M1654 84 v2.500 M1657 84 v2.500 M1660 84 v2.500 M1663 84 v2.500 M1666 84 v2.500" stroke="#fae89a" stroke-width=".8"/>
<path d="M1699 70 h16 M1707 62 v16" stroke="#d4d4d4" stroke-width="1.600"/><rect x="1704" y="67" width="6" height="6" fill="#5a5a5a" stroke="#e8e8e8" stroke-width="1.200"/><path d="M1715 62 l-3 6 h2.500 l-2 5 l6 -7 h-2.500 l2.500 -4z" fill="#f08c14"/><rect x="1710.500" y="74.500" width="7" height="7" fill="#e4e4e4" stroke="#888" stroke-width=".6"/><path d="M1714 74.500 v7 M1710.500 78 h7" stroke="#888" stroke-width=".8"/>
<path d="M1699 102 h18 M1708 93 v18" stroke="#d0d0d0" stroke-width="1.500"/><path d="M1703 102 h10 M1708 97 v10" stroke="#f2f2f2" stroke-width="2"/>
<rect x="1702" y="126" width="12" height="16" rx="1" fill="#eef0f3" stroke="#2a2a2a" stroke-width=".8"/><rect x="1703.500" y="127.500" width="9" height="3.500" fill="#9aa0b0"/><g fill="#555"><rect x="1703.500" y="133" width="2" height="1.800"/><rect x="1707" y="133" width="2" height="1.800"/><rect x="1710.500" y="133" width="2" height="1.800"/><rect x="1703.500" y="136" width="2" height="1.800"/><rect x="1707" y="136" width="2" height="1.800"/><rect x="1710.500" y="136" width="2" height="1.800"/><rect x="1703.500" y="139" width="2" height="1.800"/><rect x="1707" y="139" width="2" height="1.800"/><rect x="1710.500" y="139" width="2" height="1.800"/></g>
<!-- CLIPBOARD -->
<rect x="1748" y="65" width="26" height="29" rx="1.500" fill="#c2b6a6" stroke="#2a2a2a" stroke-width="1"/><path d="M1754 66.500 v-2 q0 -1 1 -1 h3 q1 -2.500 3 -2.500 q2 0 3 2.500 h3 q1 0 1 1 v2z" fill="#f6f6f6" stroke="#444" stroke-width=".6"/>
<path d="M1757 72 h14 l6 6 v19.500 h-20z" fill="url(#gW2)" stroke="#2a2a2a" stroke-width="1"/><path d="M1771 72 v6 h6z" fill="#fff" stroke="#777" stroke-width=".5"/>
<path d="M1800.500 64.500 l9 11 M1814.500 64.500 l-9 11" stroke="#e4e4e4" stroke-width="2.400" stroke-linecap="round"/><circle cx="1802.500" cy="79" r="2.500" fill="none" stroke="#3e3e3e" stroke-width="1.600"/><circle cx="1812.500" cy="79" r="2.500" fill="none" stroke="#3e3e3e" stroke-width="1.600"/><circle cx="1807.500" cy="74" r="1.200" fill="#333"/>
<path d="M1799 95 h9 l2 2 v12 h-11z" fill="#d6d6d6" stroke="#555" stroke-width=".5"/><path d="M1804 98 h8 l4 4 v11 h-12z" fill="#ececec" stroke="#555" stroke-width=".6"/><path d="M1812 98 v4 h4z" fill="#c8c8c8"/>
<!-- VIEW -->
<path d="M1852 70 h13 v7 h17 v14 h-30z" fill="url(#gW2)" stroke="#1e1e1e" stroke-width="1.400" stroke-linejoin="round"/><path d="M1852.500 70.500 h12 v7 h17 v3 h-29z" fill="#cdd1da" opacity=".8"/>
</svg>
<!-- ===== FILE TABS ===== -->
<div id="ftrow" class="abs"></div>
<div id="ftline" class="abs"></div>
<div id="ftstrip" class="abs"></div>
<svg width="400" height="32" style="left:0;top:177px" viewBox="0 177 400 32">
  <defs>
    <linearGradient id="ftA" x1="0" y1="0" x2="0" y2="1"><stop offset="0" stop-color="#707070"/><stop offset="1" stop-color="#5c5c5c"/></linearGradient>
    <linearGradient id="ftS" x1="0" y1="0" x2="0" y2="1"><stop offset="0" stop-color="#626262"/><stop offset="1" stop-color="#484848"/></linearGradient>
  </defs>
  <path d="M18 208 q6 -1 9 -12 l2 -9 q2 -7 8 -7 h135 q6 0 8 7 l2 9 q3 11 9 12z" fill="url(#ftS)" stroke="#333" stroke-width="1"/>
  <path d="M170 208.500 q6 -1 9 -12 l2 -9.500 q2 -7 8 -7 h155 q6 0 8 7 l2 9.500 q3 11 9 12z" fill="url(#ftA)" stroke="#2e2e2e" stroke-width="1"/>
  <path d="M362 185 h16 q9 0 10 10 l1 9 h-19 q-6 0 -7 -8z" fill="#4c4c4c" stroke="#2e2e2e" stroke-width="1"/>
  <path d="M370.500 195.500 h10 M375.500 190.500 v10" stroke="#dcdcdc" stroke-width="2.400" fill="none"/>
  <path d="M328.500 190.500 l7 7 M335.500 190.500 l-7 7" stroke="#9a9a9a" stroke-width="2" fill="none"/>
</svg>
<div class="t sy" style="left:39px;top:187px;color:#a2a2a2">Start</div>
<div class="t sy" style="left:193px;top:187px;color:#f4f4f4;font-size:14.3px;letter-spacing:-0.3px">AULA3_EX2_MOD*</div>
<!-- ===== VIEWPORT ===== -->
<div id="vp" class="abs">
<svg width="1917" height="756" style="left:0;top:0" viewBox="0 213 1917 756">
<defs>
<pattern id="mesh" width="3.6" height="3.6" patternUnits="userSpaceOnUse"><path d="M0 0H3.6V1.15H1.15V3.6H0Z" fill="#ffff00"/></pattern>
<pattern id="meshr" width="4" height="4" patternUnits="userSpaceOnUse" patternTransform="rotate(-22)"><path d="M0 0H4V1.3H1.3V4H0Z" fill="#ffff00"/></pattern>
<pattern id="meshf" width="3" height="3" patternUnits="userSpaceOnUse" patternTransform="rotate(-22)"><path d="M0 0H3V1.4H1.4V3H0Z" fill="#ffff00"/></pattern>
<pattern id="meshd" width="3" height="3" patternUnits="userSpaceOnUse" patternTransform="rotate(20)"><path d="M0 0H3V1.7H1.7V3H0Z" fill="#ffff00"/></pattern>
<linearGradient id="gUp" gradientUnits="userSpaceOnUse" x1="850" y1="280" x2="1130" y2="520"><stop offset="0" stop-color="#7e7e00"/><stop offset=".45" stop-color="#727200"/><stop offset=".8" stop-color="#5a5a00"/><stop offset="1" stop-color="#666600"/></linearGradient>
<linearGradient id="gLow" gradientUnits="userSpaceOnUse" x1="830" y1="700" x2="1200" y2="640"><stop offset="0" stop-color="#7c7c00"/><stop offset=".3" stop-color="#585800"/><stop offset=".75" stop-color="#626200"/><stop offset="1" stop-color="#7c7c00"/></linearGradient>
<filter id="b3" x="-30%" y="-30%" width="160%" height="160%"><feGaussianBlur stdDeviation="3"/></filter>
<filter id="b6" x="-30%" y="-30%" width="160%" height="160%"><feGaussianBlur stdDeviation="6"/></filter>
<clipPath id="cUp"><path d="M799 328 L1072 213 L1089 213 L1203 489 L918 600Z"/></clipPath>
<clipPath id="cLow"><path d="M793 608 L821 580 L837 555 L841 547 L914 606 L1210 492 L1204 500 L1169 541 L1162 551 L1163 584 L1165 620 L1182 700 L1210 775 L915 892Z"/></clipPath>
</defs>
<g fill="none" stroke-width="1">
<path d="M-637.5 213.0 L-314.7 969.0" stroke="#282e3a"/>
<path d="M-522.7 213.0 L-199.9 969.0" stroke="#353c4b"/>
<path d="M-407.9 213.0 L-85.1 969.0" stroke="#282e3a"/>
<path d="M-293.1 213.0 L29.7 969.0" stroke="#282e3a"/>
<path d="M-178.3 213.0 L144.5 969.0" stroke="#282e3a"/>
<path d="M-63.5 213.0 L259.3 969.0" stroke="#282e3a"/>
<path d="M51.3 213.0 L374.1 969.0" stroke="#353c4b"/>
<path d="M166.1 213.0 L488.9 969.0" stroke="#282e3a"/>
<path d="M280.9 213.0 L603.7 969.0" stroke="#282e3a"/>
<path d="M395.7 213.0 L718.5 969.0" stroke="#282e3a"/>
<path d="M510.5 213.0 L833.3 969.0" stroke="#282e3a"/>
<path d="M625.3 213.0 L948.1 969.0" stroke="#353c4b"/>
<path d="M740.1 213.0 L1062.9 969.0" stroke="#282e3a"/>
<path d="M854.9 213.0 L1177.7 969.0" stroke="#282e3a"/>
<path d="M969.7 213.0 L1292.5 969.0" stroke="#282e3a"/>
<path d="M1084.5 213.0 L1407.3 969.0" stroke="#282e3a"/>
<path d="M1199.3 213.0 L1522.1 969.0" stroke="#353c4b"/>
<path d="M1314.1 213.0 L1636.9 969.0" stroke="#282e3a"/>
<path d="M1428.9 213.0 L1751.7 969.0" stroke="#282e3a"/>
<path d="M1543.7 213.0 L1866.5 969.0" stroke="#282e3a"/>
<path d="M1658.5 213.0 L1981.3 969.0" stroke="#282e3a"/>
<path d="M1773.3 213.0 L2096.1 969.0" stroke="#353c4b"/>
<path d="M1888.1 213.0 L2210.9 969.0" stroke="#282e3a"/>
<path d="M2002.9 213.0 L2325.7 969.0" stroke="#282e3a"/>
<path d="M0.0 -66.9 L1917.0 -822.2" stroke="#282e3a"/>
<path d="M0.0 42.8 L1917.0 -712.5" stroke="#282e3a"/>
<path d="M0.0 152.5 L1917.0 -602.8" stroke="#353c4b"/>
<path d="M0.0 262.2 L1917.0 -493.1" stroke="#282e3a"/>
<path d="M0.0 371.9 L1917.0 -383.4" stroke="#282e3a"/>
<path d="M0.0 481.6 L1917.0 -273.7" stroke="#282e3a"/>
<path d="M0.0 591.3 L1917.0 -164.0" stroke="#282e3a"/>
<path d="M0.0 701.0 L1917.0 -54.3" stroke="#353c4b"/>
<path d="M0.0 810.7 L1917.0 55.4" stroke="#282e3a"/>
<path d="M0.0 920.4 L1917.0 165.1" stroke="#282e3a"/>
<path d="M0.0 1030.1 L1917.0 274.8" stroke="#282e3a"/>
<path d="M0.0 1139.8 L1917.0 384.5" stroke="#282e3a"/>
<path d="M0.0 1249.5 L1917.0 494.2" stroke="#353c4b"/>
<path d="M0.0 1359.2 L1917.0 603.9" stroke="#282e3a"/>
<path d="M0.0 1468.9 L1917.0 713.6" stroke="#282e3a"/>
<path d="M0.0 1578.6 L1917.0 823.3" stroke="#282e3a"/>
<path d="M0.0 1688.3 L1917.0 933.0" stroke="#282e3a"/>
</g>
<!-- main mesh : lower body -->
<g>
  <path id="lowbody" d="M793 608 L821 580 L837 555 L841 547 L914 606 L1210 492 L1204 500 L1169 541 L1162 551 L1163 584 L1165 620 L1172 660 L1182 700 L1194 738 L1210 775 L915 892Z" fill="url(#gLow)"/>
  <g clip-path="url(#cLow)">
    <!-- base colour variations (under the lines) -->
    <path d="M905 600 L1000 575 L1010 900 L900 900 Z" fill="#4e4e00" opacity=".55" filter="url(#b6)"/>
    <path d="M885 815 L990 855 L915 892Z" fill="#7e7e00" opacity=".6" filter="url(#b6)"/>
    <path d="M1135 790 L1180 730 L1210 775 Z" fill="#7e7e00" opacity=".6" filter="url(#b6)"/>
    <!-- mesh lines -->
    <path d="M793 608 L841 547 L914 606 L1210 492 L1160 552 L1165 620 L1182 700 L1210 775 L915 892Z" fill="url(#meshr)"/>
    <!-- brighter (denser) left band and right band -->
    <path d="M793 608 L841 547 L872 572 L882 640 L905 720 L930 800 L950 880 L915 892Z" fill="url(#meshf)"/>
    <path d="M812 585 L841 547 L862 565 L866 620 L880 680 L860 700 Z" fill="#ffff00" opacity=".75" filter="url(#b3)"/>
    <path d="M1210 492 L1160 552 L1163 620 L1182 700 L1210 775 L1180 785 L1140 700 L1112 640 L1105 575Z" fill="url(#meshf)"/>
    <path d="M1150 565 L1175 540 L1180 600 L1200 700 L1215 780 L1192 770 L1168 700 L1150 630 L1142 590Z" fill="#ffff00" opacity=".85" filter="url(#b3)"/>
    <!-- solid (line-free) olive patches -->
    <path d="M924 607 L990 582 L993 594 L936 620Z" fill="#6e6e00" opacity=".95" filter="url(#b3)"/>
    <path d="M1075 560 L1195 505 L1150 565 L1100 590Z" fill="#777700" opacity=".9" filter="url(#b3)"/>
    <path d="M1146 580 L1151 578 L1154 640 L1162 690 L1157 692 L1148 640Z" fill="#7a7a00" opacity=".75"/>
    <path d="M794 609 L803 603 L838 684 L830 692Z" fill="#7c7c00" opacity=".9" filter="url(#b3)"/>
    <g fill="#3a3a00" filter="url(#b3)" opacity=".9">
      <path d="M912 625 L940 640 L975 648 L972 660 L938 656 L925 650Z"/>
      <ellipse cx="945" cy="677" rx="14" ry="8" transform="rotate(20 945 677)"/>
      <ellipse cx="940" cy="710" rx="5" ry="12"/>
      <ellipse cx="936" cy="752" rx="5" ry="16"/>
      <ellipse cx="928" cy="806" rx="6" ry="15"/>
    </g>
    <path d="M886 836 L896 826 L925 860 L990 858 L915 892Z" fill="#7a7a00" opacity=".8" filter="url(#b3)"/>
    <path d="M1132 802 L1145 783 L1172 768 L1198 748 L1210 775Z" fill="#7c7c00" opacity=".95" filter="url(#b3)"/><ellipse cx="1170" cy="728" rx="11" ry="8" fill="#7c7c00" opacity=".8" filter="url(#b3)"/>
    <path d="M905 865 L1000 845 L950 880Z" fill="#707000" opacity=".7" filter="url(#b3)"/>
  </g>
</g>
<!-- left flare outside rim -->
<path d="M793 325 L806 362 L818 400 L828 431 L836.500 482 L840.600 547 L837.500 555 L821 580 L793 608 L800 612 L850 560 L914 606 L905 580 Z" fill="#8a8a00"/>
<path d="M793 325 L806 362 L818 400 L828 431 L836.500 482 L840.600 547 L837.500 555 L821 580 L793 608 L800 612 L850 560 L914 606 L905 580 Z" fill="url(#meshd)"/>
<path d="M796 335 L818 400 L828 431 L836.500 482 L840.600 547 L850 552 L852 480 L830 410Z" fill="#ffff00" opacity=".85"/>
<!-- upper box interior -->
<g>
  <path d="M793 325 L1072 213 L1091 213 L1210 492 L914 606Z" fill="#f0f02c"/>
  <path d="M799 328 L1072 214 L1087 213 L1203 489 L918 600Z" fill="url(#gUp)"/>
  <g clip-path="url(#cUp)">
    <!-- lit left wall + top wall (lighter base) -->
    <path d="M799 328 L1072 214 L1087 213 L1105 260 L850 365 L905 570 L918 600Z" fill="#808000" opacity=".5" filter="url(#b6)"/>
    <!-- right wall slightly lit -->
    <path d="M1087 213 L1203 489 L1150 510 L1120 380Z" fill="#6c6c00" opacity=".6" filter="url(#b6)"/>
    <!-- lines -->
    <path d="M799 328 L1072 214 L1087 213 L1203 489 L918 600Z" fill="url(#mesh)"/>
    <path d="M799 328 L1072 214 L1087 213 L1096 236 L812 352Z" fill="url(#meshr)" opacity=".35"/>
    <path d="M1087 213 L1203 489 L1112 524 L1122 440 L1095 330 L1062 240Z" fill="url(#meshf)" opacity=".8"/>
    <path d="M905 560 L1080 495 L1100 520 L918 600Z" fill="url(#meshf)" opacity=".6"/>
    <!-- converging streaks -->
    <g fill="#5a5a00" opacity=".55" filter="url(#b3)">
      <path d="M900 350 L906 350 L930 520 L924 522Z"/>
      <path d="M948 320 L954 319 L962 500 L956 500Z"/>
      <path d="M1012 300 L1018 300 L1008 470 L1002 470Z"/>
      <path d="M1040 290 L1046 291 L1050 440 L1044 440Z"/>
      <path d="M1150 330 L1156 333 L1140 470 L1132 468Z"/>
      <path d="M1168 380 L1174 384 L1160 490 L1152 488Z"/>
      <path d="M870 420 L876 418 L905 545 L899 548Z"/>
    </g>
    <!-- solid olive patches -->
    <g fill="#787800" filter="url(#b3)" opacity=".95">
      <path d="M952 272 L1018 250 L1024 272 L968 292Z"/>
      <path d="M885 305 L930 285 L928 305 L890 330Z"/>
      <ellipse cx="853" cy="392" rx="7" ry="11" transform="rotate(20 853 392)"/>
    </g>
    <g fill="#6a6a00" filter="url(#b3)" opacity=".9">
      <path d="M925 400 L940 395 L945 440 L930 470 L920 440Z"/>
      <path d="M885 500 L900 480 L905 520 L890 545Z"/>
      <ellipse cx="878" cy="492" rx="6" ry="10"/>
      <path d="M890 540 L960 515 L965 530 L900 560Z" opacity=".7"/>
      <path d="M1010 520 L1075 495 L1078 502 L1015 530Z"/>
    </g>
    <g fill="#454500" filter="url(#b3)" opacity=".9">
      <path d="M978 330 L990 335 L998 400 L990 440 L980 400Z"/>
      <ellipse cx="1081" cy="327" rx="8" ry="9" transform="rotate(-20 1081 327)"/>
      <ellipse cx="1126" cy="335" rx="5" ry="14" transform="rotate(-20 1126 335)"/>
      <path d="M1065 375 L1085 385 L1095 420 L1080 400Z"/>
    </g>
    <g fill="#343400" filter="url(#b3)" opacity=".92">
      <path d="M1068 410 L1085 420 L1100 470 L1108 520 L1090 500 L1075 455Z"/>
      <path d="M1090 390 L1102 400 L1115 450 L1105 440Z"/>
    </g>
    <path d="M1150 385 L1158 388 L1180 460 L1190 490 L1180 492 L1165 450Z" fill="#7c7c00" opacity=".85"/>
  </g>
  <!-- hole -->
  <path d="M907 569.400 L1079.600 502 L1096 528.600 L920 599Z" fill="#212730"/>
  <path d="M1079.600 502 L1096 528.600 L1110 522 L1100 500Z" fill="#5a5a00"/>
  <path d="M1079.600 502 L1096 528.600 L1110 522 L1100 500Z" fill="url(#meshf)"/>
  <!-- rims -->
  <g stroke="#f0f02c" stroke-width="5" fill="none" stroke-linejoin="miter">
    <path d="M795.500 326 L916.500 603.500 L1207.500 491"/>
  </g>
  <g stroke="#ffff00" stroke-width="1.500" fill="none">
    <path d="M793 325 L1072 213 M1091 213 L1210 492 L914 606 L793 325"/>
    <path d="M907 569.400 L920 599 L1096 528.600" stroke-width="2"/>
  </g>
</g>
<!-- crosshair -->
<g fill="none" stroke-width="1">
  <path d="M1199 506 L1239 602" stroke="#5fd06a"/>
  <path d="M1193 582.500 L1292 544" stroke="#d0676b"/>
  <path d="M1225.500 551 L1225.500 579" stroke="#5a62e0" stroke-width="1.400"/>
  <rect x="1222.500" y="566.500" width="6" height="6" stroke="#fff" fill="#212730"/>
</g>
<!-- bottom-left mesh piece -->
<g>
  <path d="M0 814 L30 813.500 L100 818 L172.500 821.500 Q181 823 185.500 831 L204 870 L222.600 910.600 Q233 940 237.500 969 L0 969Z" fill="#8c8c00"/>
  <path d="M0 814 L30 813.500 L100 818 L172.500 821.500 Q181 823 185.500 831 L204 870 L222.600 910.600 Q233 940 237.500 969 L0 969Z" fill="url(#meshd)"/>
  <path d="M60 816 L172 822 Q182 824 186 832 L222 910 Q232 940 237 969 L180 969 L170 900 L130 850Z" fill="#6e6e00" opacity=".5"/>
  <path d="M60 816 L172 822 Q182 824 186 832 L222 910 Q232 940 237 969 L180 969 L170 900 L130 850Z" fill="url(#meshr)"/>
  <path d="M0 814 L30 813.500 L62 816 Q105 838 130 856 Q162 888 172 925 L178 969 L0 969Z" fill="#eded2d"/>
  <path d="M150 880 L175 925 L180 969 L200 969 L195 920 L170 870Z" fill="#ffff00" opacity=".8"/>
</g>
</svg>
</div>
<!-- viewport overlays (page coords) -->
<div class="t sy" style="left:2.5px;top:220px;color:#ececec;letter-spacing:0.05px">[&#8722;][Custom View][Shaded with edges]</div>
<svg width="70" height="20" style="left:1843px;top:220px" viewBox="1843 220 70 20">
  <rect x="1846" y="231" width="13" height="3" fill="#fff"/>
  <rect x="1872.500" y="227.500" width="8" height="8" fill="none" stroke="#fff" stroke-width="2"/>
  <path d="M1876 225 h8 v8" fill="none" stroke="#fff" stroke-width="2"/>
  <path d="M1898 225 l9 9 M1907 225 l-9 9" stroke="#fff" stroke-width="2.600" fill="none"/>
</svg>
<!-- viewcube -->
<svg width="160" height="180" style="left:1750px;top:270px" viewBox="1750 270 160 180">
  <defs>
    <filter id="vb" x="-30%" y="-30%" width="160%" height="160%"><feGaussianBlur stdDeviation="4"/></filter>
  </defs>
  <circle cx="1832" cy="341" r="58.500" fill="none" stroke="#464c56" stroke-width="13.500"/>
  <g font-family="Liberation Sans, sans-serif" font-weight="bold" font-size="20" fill="#c9cbcf" text-anchor="middle">
    <text transform="translate(1810 294) rotate(-20)">N</text>
    <text transform="translate(1888 322) rotate(-20)">E</text>
    <text transform="translate(1857 402) rotate(-20)">S</text>
    <text transform="translate(1776 367) rotate(-20)">W</text>
  </g>
  <path d="M1796 312 L1846 292 L1868 344 L1818 366Z" fill="#7c8088" opacity=".55" filter="url(#vb)"/>
  <path d="M1799 313 L1805 339 L1812 355 L1818 367 L1866 347 L1866 335 Z" fill="#8e9298"/>
  <path d="M1797 311 L1846 291 L1867 336 L1816 357Z" fill="#b9bcc1"/>
  <path d="M1810 315 L1842 302 L1855 333 L1822 346Z" fill="#a9aeb5"/>
  <text transform="translate(1832 330) rotate(-20)" font-family="Liberation Sans, sans-serif" font-weight="bold" font-size="13.500" fill="#4a4f58" text-anchor="middle">TOP</text>
  <rect x="1803" y="423" width="57" height="20" rx="5" fill="#8b8fa0" stroke="#797d8c" stroke-width="1.500"/>
  <text x="1808" y="438" font-family="Liberation Sans, sans-serif" font-size="13.500" fill="#4f5464">WCS</text>
  <path d="M1844 429.500 h10 l-5 6.500z" fill="none" stroke="#a9adb6" stroke-width="1"/>
</svg>
<!-- nav bar -->
<svg width="40" height="262" style="left:1877px;top:473px" viewBox="1877 473 40 262">
  <path d="M1917 474.500 h-35 q-4.500 0 -4.500 4.500 v249 q0 4.500 4.500 4.500 h35z" fill="#959aa2" fill-opacity=".49" stroke="#686d75" stroke-width="1"/>
  <path d="M1879 542.500 h38 M1879 676.500 h38" stroke="#50555d" stroke-width="1"/>
  <g fill="none" stroke="#494e56" stroke-width="1.800" stroke-linejoin="round">
    <circle cx="1896.500" cy="509" r="13"/><circle cx="1896.500" cy="509" r="6.500"/><path d="M1896.500 496 v6 M1883.500 509 h6 M1903.500 509 h6 M1896.500 515.500 v6" stroke-width="1.200"/>
    <path d="M1886.500 566 q-4 -7 0 -7 q2 0 4 5 v-11 q0 -2 1.800 -2 q1.800 0 1.800 2 v-3 q0 -2 1.800 -2 q1.800 0 1.800 2 v2 q0 -2 1.800 -2 q1.800 0 1.800 2 v4 q0 -2 1.800 -2 q1.800 0 1.800 2 v10 q0 8 -6 9 h-5 q-4 0 -7 -7z"/>
    <path d="M1883 583 l17 17 M1902 583 l-19 19"/><path d="M1883 588 v-5 h5 M1897 583 h5 v5 M1883 597 v5 h5" stroke-width="1.500"/><circle cx="1901.500" cy="600" r="5" fill="#5a5f67"/><path d="M1905.500 604.500 l5 5" stroke-width="3"/>
    <path d="M1894.500 655 v-19 h-3 l5 -6 l5 6 h-3 v19z"/><path d="M1890 640 q-8 3 -5 7 q4 4 12 4 q10 0 13 -4 q2 -4 -6 -7" stroke-width="1.400"/><path d="M1889 651 l-4 -3.500 l4.500 -2.500" stroke-width="1.400"/>
    <rect x="1882.500" y="693" width="20" height="16"/><path d="M1889 696.500 v9 l9 -4.500z" fill="#494e56"/>
    <path d="M1882.500 682 h6.500 v7 h-6.500z M1892.500 682 h6.500 v7 h-6.500z M1902.500 682 h6.500 v7 h-6.500z" stroke-width="1.300"/>
  </g>
  <g fill="#464b53"><path d="M1893 532.500 h7 l-3.500 4z"/><path d="M1893 619 h7 l-3.500 4z"/><path d="M1893 666.500 h7 l-3.500 4z"/></g>
  <circle cx="1909.500" cy="479.500" r="4.200" fill="#50555d" stroke="#686d75"/><path d="M1907.500 477.500 l4 4 M1911.500 477.500 l-4 4" stroke="#686d75" stroke-width="1"/>
  <circle cx="1909.500" cy="726.500" r="4.200" fill="#50555d" stroke="#686d75"/><path d="M1907 725.500 h5 M1907 727.500 h5" stroke="#686d75" stroke-width="1"/>
</svg>
<!-- UCS icon -->
<svg width="130" height="100" style="left:10px;top:840px" viewBox="10 840 130 100">
  <defs>
    <linearGradient id="ug" x1="0" y1="0" x2="1" y2="0"><stop offset="0" stop-color="#3d8a3d"/><stop offset=".5" stop-color="#6cc06c"/><stop offset="1" stop-color="#3d8a3d"/></linearGradient>
  </defs>
  <path d="M49 918 L27 865" stroke="#2f7a33" stroke-width="7" stroke-linecap="round"/>
  <path d="M48 916 L27 866" stroke="#62b565" stroke-width="3.500" stroke-linecap="round"/>
  <path d="M52 917 L105 896" stroke="#a8474c" stroke-width="6.500" stroke-linecap="round"/>
  <path d="M52 916 L104 895.500" stroke="#d36d72" stroke-width="3" stroke-linecap="round"/>
  <path d="M49 903 V919" stroke="#1f3763" stroke-width="7" stroke-linecap="round"/>
  <ellipse cx="49" cy="902" rx="3.500" ry="2.500" fill="#4d7fd1"/>
  <g fill="none" stroke-width="1.200">
    <path d="M22 845 l8 7 l7 -7 M30 852 v8" stroke="#1fbf2a"/>
    <path d="M47 882 h14 l-14 15 h15" stroke="#1c7ff2"/>
    <path d="M101 876 l15 15 M116 876 l-15 15" stroke="#f0322d"/>
  </g>
</svg>
<!-- command history + command bar -->
<div class="abs" style="left:459px;top:862px;width:77px;height:19px;background:#585858;border-radius:2px"></div>
<div class="abs" style="left:459px;top:887px;width:77px;height:19px;background:#585858;border-radius:2px"></div>
<div class="abs" style="left:459px;top:912px;width:77px;height:19px;background:#585858;border-radius:2px"></div>
<div class="t" style="left:461px;top:863px;font-family:'DejaVu Sans Mono','Liberation Mono',monospace;font-size:14.4px;color:#ededed;letter-spacing:0.3px">Command:</div>
<div class="t" style="left:461px;top:888px;font-family:'DejaVu Sans Mono','Liberation Mono',monospace;font-size:14.4px;color:#ededed;letter-spacing:0.3px">Command:</div>
<div class="t" style="left:461px;top:913px;font-family:'DejaVu Sans Mono','Liberation Mono',monospace;font-size:14.4px;color:#ededed;letter-spacing:0.3px">Command:</div>
<div class="abs" style="left:385px;top:937px;width:1152px;height:32px;background:#c1c1c3;border:1px solid #8a8a8a;border-radius:2px 2px 0 0"></div>
<div class="abs" style="left:385px;top:937px;width:67px;height:32px;background:linear-gradient(#454545,#363636);border:1px solid #666;border-right:none;border-radius:3px 0 0 0"></div>
<svg width="120" height="32" style="left:385px;top:937px" viewBox="385 937 120 32">
  <g fill="#8a8a8a"><rect x="390" y="943" width="1.500" height="2"/><rect x="393" y="943" width="1.500" height="2"/><rect x="390" y="947" width="1.500" height="2"/><rect x="393" y="947" width="1.500" height="2"/><rect x="390" y="951" width="1.500" height="2"/><rect x="393" y="951" width="1.500" height="2"/><rect x="390" y="955" width="1.500" height="2"/><rect x="393" y="955" width="1.500" height="2"/><rect x="390" y="959" width="1.500" height="2"/><rect x="393" y="959" width="1.500" height="2"/><rect x="390" y="963" width="1.500" height="2"/><rect x="393" y="963" width="1.500" height="2"/></g>
  <path d="M404 948.500 l9 9 M413 948.500 l-9 9" stroke="#f0f0f0" stroke-width="2.200" fill="none"/>
  <path d="M430 947.500 a4.300 4.300 0 0 0 5.500 5.500 l7 7.500 a1.800 1.800 0 0 0 2.600 -2.600 l-7.500 -7 a4.300 4.300 0 0 0 -5.200 -5.600 l2.600 2.600 l-.8 2.200 l-2.200 .8z" fill="#ececec" stroke="#1e1e1e" stroke-width=".7"/>
  <rect x="458" y="944" width="18.5" height="17" rx="2" fill="#a4aab8" stroke="#868c9a"/>
  <path d="M462 948.5 l5 4 l-5 4 M468 957.5 h6" stroke="#3e4250" stroke-width="1.600" fill="none"/>
  <path d="M481 951 h7 l-3.500 4z" fill="#555"/>
</svg>
<div class="t" style="left:497px;top:944px;font-family:'DejaVu Sans Mono','Liberation Mono',monospace;font-style:italic;font-size:14.4px;color:#707074;letter-spacing:0.25px">Type a command</div>
<div class="abs" style="left:1521px;top:951px;width:0;height:0;border-left:4.500px solid transparent;border-right:4.500px solid transparent;border-bottom:5px solid #222"></div>
<!-- ===== LAYOUT TABS + STATUS BAR ===== -->
<div id="ltrow" class="abs"></div>
<svg width="300" height="28" style="left:0;top:969px" viewBox="0 969 300 28">
  <defs>
    <linearGradient id="ltM" x1="0" y1="0" x2="0" y2="1"><stop offset="0" stop-color="#505050"/><stop offset=".5" stop-color="#666"/><stop offset="1" stop-color="#8c8c8c"/></linearGradient>
    <linearGradient id="ltL" x1="0" y1="0" x2="0" y2="1"><stop offset="0" stop-color="#464646"/><stop offset="1" stop-color="#5c5c5c"/></linearGradient>
  </defs>
  <rect x="0" y="969" width="300" height="1" fill="#454545"/>
  <path d="M166 970 C175 970 175 992.500 185 992.500 H237 C247 992.500 247 970 256 970Z" fill="url(#ltL)" stroke="#2c2c2c"/>
  <path d="M84 970 C93 970 93 992.500 103 992.500 H157 C167 992.500 167 970 176 970Z" fill="url(#ltL)" stroke="#2c2c2c"/>
  <path d="M7 970 C17 970 16 992.500 27 992.500 H75 C86 992.500 85 970 95 970Z" fill="url(#ltM)" stroke="#2c2c2c"/>
  <path d="M254 992 C256 981 260 973 267 973 H282 C282 984 277 992 270 992Z" fill="#4a4a4a" stroke="#303030"/>
  <path d="M263 982.500 h10 M268 977.500 v10" stroke="#dcdcdc" stroke-width="2.200" fill="none"/>
</svg>
<div class="t sy" style="left:28px;top:973px;font-weight:bold;color:#fff;font-size:16px;letter-spacing:-0.5px">Model</div>
<div class="t sy" style="left:101px;top:973px;color:#c4c4c4">Layout1</div>
<div class="t sy" style="left:182px;top:973px;color:#c4c4c4">Layout2</div>
<div id="status" class="abs"></div>
<svg width="794" height="34" style="left:1123px;top:995px" viewBox="1123 995 794 34">
  <g stroke="#787878" stroke-width="1" fill="none">
    <path d="M1185.500 996 v32 M1267.500 996 v32 M1299.500 996 v32 M1428.500 996 v32 M1509.500 996 v32 M1642.500 996 v32 M1693.500 996 v32 M1725.500 996 v32 M1758.500 996 v32 M1792.500 996 v32 M1856.500 996 v32"/>
  </g>
  <g stroke="#3e3e3e" stroke-width="1" fill="none">
    <path d="M1186.500 996 v32 M1268.500 996 v32 M1300.500 996 v32 M1429.500 996 v32 M1510.500 996 v32 M1643.500 996 v32 M1694.500 996 v32 M1726.500 996 v32 M1759.500 996 v32 M1793.500 996 v32 M1857.500 996 v32"/>
  </g>
  <!-- grid (blue) -->
  <g stroke="#1e90ff" stroke-width="1.600" fill="none">
    <path d="M1196.500 1003 v18 M1200.500 1002 v20 M1204.500 1002 v20 M1208.500 1003 v18"/>
    <path d="M1194 1005.500 h17 M1193 1009.500 h19 M1193 1013.500 h19 M1194 1017.500 h17" stroke-width="1.200" stroke-dasharray="2 2"/>
  </g>
  <!-- dotted grid -->
  <g fill="#b4b4b4"><rect x="1222.5" y="1003.5" width="1.5" height="1.5"/><rect x="1226.1" y="1003.5" width="1.5" height="1.5"/><rect x="1229.7" y="1003.5" width="1.5" height="1.5"/><rect x="1233.3" y="1003.5" width="1.5" height="1.5"/><rect x="1236.9" y="1003.5" width="1.5" height="1.5"/><rect x="1240.5" y="1003.5" width="1.5" height="1.5"/><rect x="1222.5" y="1007.1" width="1.5" height="1.5"/><rect x="1226.1" y="1007.1" width="1.5" height="1.5"/><rect x="1229.7" y="1007.1" width="1.5" height="1.5"/><rect x="1233.3" y="1007.1" width="1.5" height="1.5"/><rect x="1236.9" y="1007.1" width="1.5" height="1.5"/><rect x="1240.5" y="1007.1" width="1.5" height="1.5"/><rect x="1222.5" y="1010.7" width="1.5" height="1.5"/><rect x="1226.1" y="1010.7" width="1.5" height="1.5"/><rect x="1229.7" y="1010.7" width="1.5" height="1.5"/><rect x="1233.3" y="1010.7" width="1.5" height="1.5"/><rect x="1236.9" y="1010.7" width="1.5" height="1.5"/><rect x="1240.5" y="1010.7" width="1.5" height="1.5"/><rect x="1222.5" y="1014.3" width="1.5" height="1.5"/><rect x="1226.1" y="1014.3" width="1.5" height="1.5"/><rect x="1229.7" y="1014.3" width="1.5" height="1.5"/><rect x="1233.3" y="1014.3" width="1.5" height="1.5"/><rect x="1236.9" y="1014.3" width="1.5" height="1.5"/><rect x="1240.5" y="1014.3" width="1.5" height="1.5"/><rect x="1222.5" y="1017.9" width="1.5" height="1.5"/><rect x="1226.1" y="1017.9" width="1.5" height="1.5"/><rect x="1229.7" y="1017.9" width="1.5" height="1.5"/><rect x="1233.3" y="1017.9" width="1.5" height="1.5"/><rect x="1236.9" y="1017.9" width="1.5" height="1.5"/><rect x="1240.5" y="1017.9" width="1.5" height="1.5"/><rect x="1222.5" y="1021.5" width="1.5" height="1.5"/><rect x="1226.1" y="1021.5" width="1.5" height="1.5"/><rect x="1229.7" y="1021.5" width="1.5" height="1.5"/><rect x="1233.3" y="1021.5" width="1.5" height="1.5"/><rect x="1236.9" y="1021.5" width="1.5" height="1.5"/><rect x="1240.5" y="1021.5" width="1.5" height="1.5"/></g>
  <g fill="#f4f4f4">
    <path d="M1252 1009 h9 l-4.500 5.500z"/><path d="M1365 1009 h9 l-4.500 5.500z"/><path d="M1414 1009 h9 l-4.500 5.500z"/><path d="M1494 1009 h9 l-4.500 5.500z"/><path d="M1628 1009 h9 l-4.500 5.500z"/><path d="M1680 1009 h9 l-4.500 5.500z"/>
  </g>
  <!-- +_ dynamic input -->
  <path d="M1274 1009.500 h9 M1278.500 1005 v9" stroke="#e4e4e4" stroke-width="1.600" fill="none"/>
  <rect x="1281" y="1014" width="13" height="5" rx="1.500" fill="#cfcfcf"/>
  <!-- ortho -->
  <path d="M1308.500 1004 v15 h14.500" stroke="#2b8cf0" stroke-width="2.400" fill="none"/><path d="M1309.500 1013.500 h5 v5" stroke="#2b8cf0" stroke-width="1.200" fill="none"/>
  <!-- polar -->
  <circle cx="1343" cy="1013" r="7.500" stroke="#cfcfcf" stroke-width="1.800" fill="none"/><path d="M1343 1013 h12 M1343 1013 l7 -7" stroke="#cfcfcf" stroke-width="1.400" fill="none"/>
  <!-- isnap -->
  <path d="M1385 1003 l18 19 M1402 1003 l-9 9 M1393.500 1002 v20" stroke="#9a9a9a" stroke-width="1.600" fill="none"/>
  <!-- angle -->
  <path d="M1435 1020.500 h16 M1436 1020 l14 -12 M1444 1013 l4 4" stroke="#cfcfcf" stroke-width="1.600" fill="none"/>
  <!-- osnap -->
  <rect x="1467.500" y="1005.500" width="15" height="15" stroke="#2b8cf0" stroke-width="2" fill="none"/><rect x="1465" y="1003" width="5" height="5" fill="#18b040" stroke="#0a4a18" stroke-width=".8"/>
  <!-- annotation icons -->
  <path d="M1526 1001 L1529 1011 L1536 1020.5 L1529 1017.5 L1526 1022.5 L1523 1017.5 L1516 1020.5 L1523 1011Z" fill="#2b8cf0"/><circle cx="1532" cy="1005.5" r="3.2" fill="#505050" stroke="#2b8cf0" stroke-width="1.5"/>
  <path d="M1556 1001 L1559 1011 L1566 1020.5 L1559 1017.5 L1556 1022.5 L1553 1017.5 L1546 1020.5 L1553 1011Z" fill="#b4b4b4"/><path d="M1562 1002 l-3.500 5.500 h4 l-3.500 5.500" stroke="#dcdcdc" stroke-width="1.300" fill="none"/>
  <path d="M1586 1001 L1589 1011 L1596 1020.5 L1589 1017.5 L1586 1022.5 L1583 1017.5 L1576 1020.5 L1583 1011Z" fill="#b4b4b4"/>
  <!-- gear -->
  <circle cx="1660" cy="1012" r="5.500" fill="none" stroke="#c4c4c4" stroke-width="4" stroke-dasharray="2.900 1.420"/><circle cx="1660" cy="1012" r="4.500" fill="#c4c4c4"/><circle cx="1660" cy="1012" r="2" fill="#505050"/>
  <!-- plus -->
  <path d="M1701 1012.500 h18 M1710 1003.500 v18" stroke="#e0e0e0" stroke-width="2" fill="none"/>
  <!-- shapes -->
  <g stroke="#bdbdbd" stroke-width="1.500" fill="none"><rect x="1733.500" y="1003.500" width="7" height="7"/><circle cx="1748" cy="1010" r="3.800"/><path d="M1735 1021 l4.500 -7.500 l4.500 7.500z"/></g>
  <!-- blue circle -->
  <circle cx="1776" cy="1012" r="9.500" fill="#0f4c98" stroke="#1f86f2" stroke-width="2.200"/><path d="M1774 1016 l5 -5" stroke="#2f96ff" stroke-width="1.800" fill="none"/><circle cx="1774.5" cy="1015.5" r="1.300" fill="#2f96ff"/>
  <!-- hw accel icon -->
  <rect x="1798" y="1005" width="14" height="13" fill="#e8c020" stroke="#eee" stroke-width="1"/><rect x="1798.500" y="1005.500" width="13" height="5" fill="#5a96e0"/><path d="M1800 1002 v6 M1808 1002 v6" stroke="#eee" stroke-width="1.200"/><path d="M1804 1017 l3 4 l7 -8" stroke="#3aa43a" stroke-width="2.400" fill="none"/>
  <!-- graph icon -->
  <rect x="1827" y="1003" width="19" height="18" fill="#e8e8e8" stroke="#222" stroke-width="1"/><path d="M1829 1019 q7 -24 15 0" stroke="#555" stroke-width="1.500" fill="none"/><path d="M1846 1013 l5 9 h-10z" fill="#e87820"/>
  <!-- fullscreen -->
  <rect x="1864.500" y="1004.500" width="19" height="15" stroke="#cfcfcf" stroke-width="1.400" fill="none"/><path d="M1868 1016 l4 -3.500 M1868 1016 v-3 M1868 1016 h3 M1880 1008 l-4 3.500 M1880 1008 v3 M1880 1008 h-3" stroke="#cfcfcf" stroke-width="1.300" fill="none"/>
  <!-- menu -->
  <path d="M1896 1006.500 h17 M1896 1012.500 h17 M1896 1018.500 h17" stroke="#e0e0e0" stroke-width="2" fill="none"/>
</svg>
<div class="t sy" style="left:1129px;top:1003px;color:#fff;font-size:15px;letter-spacing:-0.45px">MODEL</div>
<div class="t sy" style="left:1606px;top:1003px;color:#f0f0f0;font-size:15px;letter-spacing:-0.5px">1:1</div>
<!-- ===== TASKBAR ===== -->
<div id="taskbar" class="abs"></div>
<div class="abs" style="left:558px;top:1029px;width:60px;height:49px;background:#50605e"></div>
<div class="abs" style="left:191px;top:1075px;width:40px;height:3px;background:#76b9ed"></div>
<div class="abs" style="left:231px;top:1075px;width:10px;height:3px;background:#5a8cb4"></div>
<div class="abs" style="left:501px;top:1075px;width:50px;height:3px;background:#76b9ed"></div>
<div class="abs" style="left:558px;top:1075px;width:60px;height:3px;background:#76b9ed"></div>
<svg width="640" height="49" style="left:0;top:1029px" viewBox="0 1029 640 49">
  <!-- windows -->
  <g fill="#fff"><path d="M20 1047 l8.500 -1.200 v8.200 h-8.500z M30 1045.600 l10.500 -1.500 v10 h-10.500z M20 1055.500 h8.500 v8.200 l-8.500 -1.200z M30 1055.500 h10.500 v10 l-10.500 -1.500z"/></g>
  <!-- task view -->
  <g fill="none" stroke="#fff" stroke-width="1.300"><rect x="80.600" y="1049.700" width="11.800" height="7.800"/><path d="M80.600 1044 v3.400 h11.800 v-3.400 M80.600 1062.700 v-3.200 h11.800 v3.200 M98.400 1044 v4.700 M98.400 1054.300 v8.400"/></g><rect x="96.900" y="1050" width="3.100" height="3.100" fill="#fff"/>
  <!-- edge -->
  <defs>
    <linearGradient id="edg" x1="0" y1="0" x2="1" y2="1"><stop offset="0" stop-color="#35c1f1"/><stop offset=".5" stop-color="#1b9de2"/><stop offset="1" stop-color="#0c59a4"/></linearGradient>
    <linearGradient id="edg2" x1="0" y1="0" x2="1" y2="0"><stop offset="0" stop-color="#2aa9e6"/><stop offset=".55" stop-color="#34c6d0"/><stop offset="1" stop-color="#5ee072"/></linearGradient>
  </defs>
  <circle cx="154" cy="1054" r="15" fill="url(#edg)"/>
  <path d="M139.200 1052 C141 1043 147 1039 155 1039 C163 1039.500 169 1045 169 1053 C169 1057 166 1059.500 162 1059.500 C158 1059.500 157.500 1057 158.500 1055.500 C160 1053 158 1048 152 1048 C146 1048 141 1052 139.200 1056Z" fill="url(#edg2)"/>
  <path d="M139.200 1056 C141 1050 147 1047.500 152 1048 C146.500 1050 145 1056 148 1061 C151 1066 158 1067.500 164.500 1064.500 C161 1069 154 1070 148 1067.500 C142.500 1064.500 139.500 1060 139.200 1056Z" fill="#0c5aa6"/>
  <path d="M152 1048 C158 1048 160 1053 158.500 1055.500 C157.500 1057 158 1059.500 162 1059.500 C165 1059.500 168 1058 169 1055 C168.500 1060 166 1063 164.500 1064.500 C158 1067.500 151 1066 148 1061 C145 1056 146.500 1050 152 1048Z" fill="#1573c4"/>
  <path d="M158.500 1055.500 C157.500 1057 158 1059.500 162 1059.500 C166 1059.500 169 1057 169 1053 L171 1056 L168 1062 L160 1062 Z" fill="#2a3d3b"/>
  <path d="M164.500 1064.500 C166 1063 168.500 1060 169 1055 C168 1058 165 1059.500 162 1059.500 C165 1061 165.500 1063 164.500 1064.500Z" fill="#2a3d3b"/>
  <!-- explorer -->
  <path d="M202 1041 h9 l3 3 h16 v4 h-28z" fill="#e8a317"/><rect x="202" y="1046" width="28" height="18" rx="1" fill="#fcd462"/><path d="M207 1056 h18 v8 h-18z" fill="#2d8ae0"/><rect x="211" y="1060" width="10" height="4" fill="#fcd462"/>
  <!-- mail -->
  <path d="M263 1050 l15 -10 l15 10z" fill="#0f5db2"/><path d="M265.500 1050 h25 v8 h-25z" fill="#f4f4f4"/><path d="M265.500 1050 h25 l-12.500 6z" fill="#d4d8dc"/>
  <path d="M263 1050 l15 9 l-15 9z" fill="#1e8ae6"/><path d="M293 1050 l-15 9 l15 9z" fill="#3cc3f4"/><path d="M263 1068 l15 -9.500 l15 9.500z" fill="#1fa0ee"/>
  <!-- chrome -->
  <circle cx="340" cy="1054" r="15" fill="#fbc116"/><path d="M340 1054 L327 1046.500 A15 15 0 0 1 353 1046.500Z" fill="#e33b2e"/><path d="M340 1039 A15 15 0 0 1 353 1046.500 L340 1046.500Z" fill="#e33b2e"/><path d="M327 1046.500 A15 15 0 0 0 340 1069 L346.500 1058Z" fill="#2da94f"/><path d="M327 1046.500 L340 1054 L333.500 1058Z" fill="#2da94f"/><circle cx="340" cy="1054" r="7" fill="#fff"/><circle cx="340" cy="1054" r="5.500" fill="#4285f4"/>
  <!-- powerpoint -->
  <circle cx="404" cy="1054" r="14" fill="#ed6c47"/><path d="M404 1040 a14 14 0 0 1 14 14 h-14z" fill="#ff8f6b"/><path d="M404 1054 h14 a14 14 0 0 1 -14 14z" fill="#d35230"/><rect x="387" y="1046" width="16" height="16" rx="1.500" fill="#c43e1c"/><text x="395" y="1059" text-anchor="middle" font-family="Liberation Sans, sans-serif" font-weight="bold" font-size="12" fill="#fff">P</text>
  <!-- word -->
  <rect x="455" y="1040" width="23" height="28" rx="2" fill="#2b7cd3"/><rect x="455" y="1040" width="23" height="7" fill="#41a5ee"/><rect x="455" y="1054" width="23" height="7" fill="#185abd"/><rect x="455" y="1061" width="23" height="7" rx="1" fill="#103f91"/><rect x="449" y="1046" width="16" height="16" rx="1.500" fill="#185abd"/><text x="457" y="1059" text-anchor="middle" font-family="Liberation Sans, sans-serif" font-weight="bold" font-size="12" fill="#fff">W</text>
  <!-- movies -->
  <path d="M510 1047 l30 -6 v6z" fill="#41a5ee"/><rect x="510" y="1047" width="31" height="21" rx="1" fill="#0f6cbd"/><path d="M510 1047 h31 v5 h-31z" fill="#2b9af3"/><path d="M521 1052 v13 l11 -6.500z" fill="#fff"/>
  <!-- autocad -->
  <rect x="573" y="1039" width="30" height="30" fill="#f6e6e0"/>
  <path d="M584.500 1041 h6.500 l7.500 24 h-5.500 l-1.600 -5.500 h-8 l-2.200 5.500 h-4.700z M586.700 1046.500 l-2.700 9 h6z" fill="#c8141c" fill-rule="evenodd"/>
</svg>
<svg width="320" height="49" style="left:1597px;top:1029px" viewBox="1597 1029 320 49">
  <path d="M1619 1058 l8 -8 l8 8" stroke="#fff" stroke-width="1.500" fill="none"/>
  <path d="M1651 1060 q-4.500 0 -4.500 -4 q0 -3.500 4 -4 q1.500 -4.500 6 -4.500 q4 0 5.500 3.500 q5.500 0 5.500 4.500 q0 4.500 -4.500 4.500z" fill="#d0d0d0"/><path d="M1647 1058 q8 -5 20 -2 q0 4 -4.500 4 h-11.500 q-3 0 -4 -2z" fill="#fff"/>
  <g stroke="#fff" stroke-width="1.400" fill="none"><rect x="1682.500" y="1048.500" width="14" height="9"/><path d="M1697.500 1051 v4 M1679 1046 v5 h3 M1677 1047.500 h4"/></g><rect x="1684" y="1050" width="6" height="6" fill="#fff"/>
  <g fill="none" stroke-width="1.300"><path d="M1710.500 1061.500 a14 14 0 0 1 14 -14" stroke="#7e848a"/><path d="M1714.500 1061.500 a10 10 0 0 1 10 -10" stroke="#8e949a"/><path d="M1718.500 1061.500 a6 6 0 0 1 6 -6" stroke="#c4c8cc"/></g><circle cx="1724" cy="1060.500" r="1.700" fill="#fff"/>
  <path d="M1738 1051 h3 l4 -4 v14 l-4 -4 h-3z" stroke="#fff" stroke-width="1.200" fill="none"/><path d="M1748 1050 q3 4 0 8 M1751 1047.500 q5 6.500 0 13" stroke="#fff" stroke-width="1.200" fill="none"/>
  <path d="M1868 1046 h20 v14 h-13 l-4 4 v-4 h-3z" fill="#fff"/><path d="M1872 1050 h12 M1872 1053 h12 M1872 1056 h8" stroke="#1a2029" stroke-width="1"/>
  <circle cx="1888" cy="1063.500" r="9.500" fill="#1a2029" stroke="#8a8e94" stroke-width="1.200"/>
  <text x="1888" y="1068.500" text-anchor="middle" font-family="Liberation Sans, sans-serif" font-size="14" fill="#fff">1</text>
</svg>
<div class="t tc" style="left:1768px;width:80px;top:1034px;color:#fff;font-size:14.500px;letter-spacing:-0.3px">10:25</div>
<div class="t tc" style="left:1758px;width:100px;top:1057px;color:#fff;font-size:15.5px;letter-spacing:-0.15px">22/03/2021</div>
<div class="abs" style="left:1914px;top:1029px;width:1px;height:49px;background:#5a5e64"></div>
</body>
</html>
